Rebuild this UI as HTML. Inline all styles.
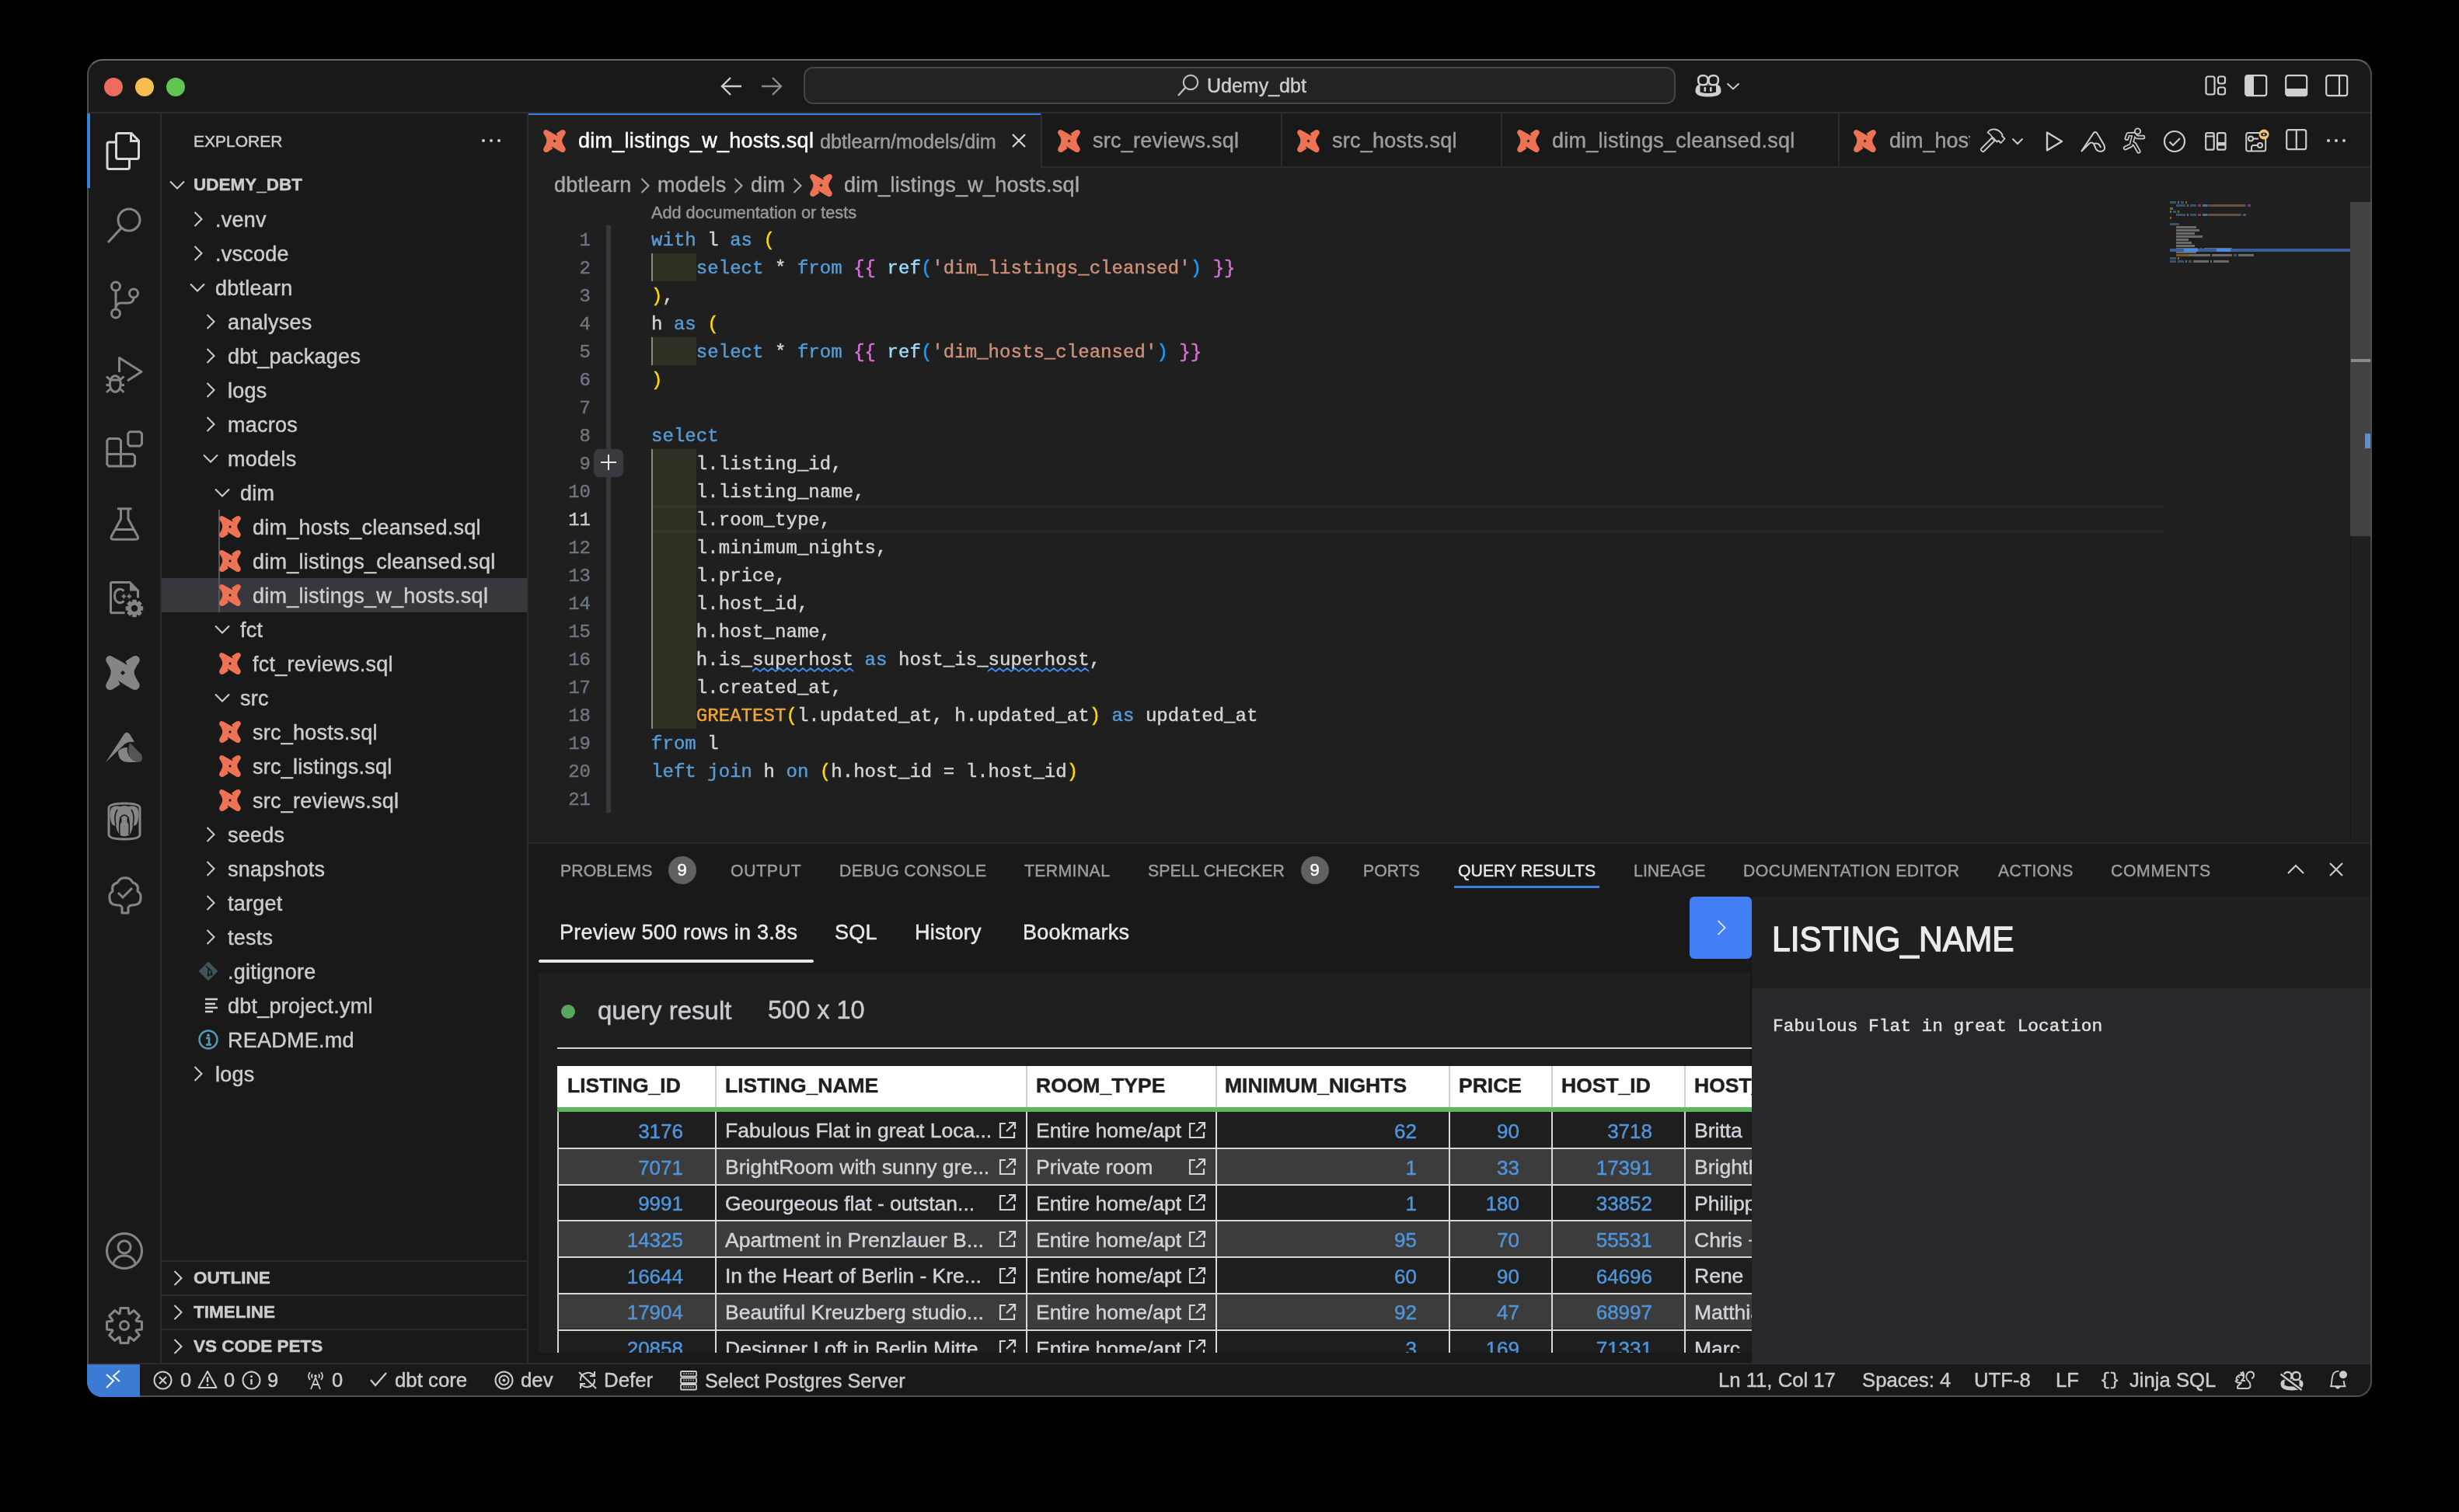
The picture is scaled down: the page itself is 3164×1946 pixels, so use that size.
<!DOCTYPE html>
<html><head><meta charset="utf-8">
<style>
*{box-sizing:border-box;margin:0;padding:0}
html,body{width:3164px;height:1946px;background:#000;overflow:hidden}
body{font-family:"Liberation Sans",sans-serif;color:#cccccc;position:relative}
.a{position:absolute}
.win{position:absolute;left:0;top:0;width:3164px;height:1946px;clip-path:inset(76px 112px 148px 112px round 20px);will-change:transform}
.t{position:absolute;white-space:pre;line-height:1;-webkit-text-stroke:0.45px currentColor}
.mono{font-family:"Liberation Mono",monospace}
svg{position:absolute;overflow:visible}
</style></head><body>
<div class="win">
<div class="a" style="left:112px;top:76px;width:2940px;height:1722px;background:#191919;"></div>
<div class="a" style="left:112px;top:144px;width:2940px;height:2px;background:#2d2d2d;"></div>
<div class="a" style="left:206px;top:146px;width:2px;height:1608px;background:#2b2b2b;"></div>
<div class="a" style="left:678px;top:146px;width:2px;height:1608px;background:#2b2b2b;"></div>
<div class="a" style="left:680px;top:146px;width:2372px;height:938px;background:#1f1f1f;"></div>
<div class="a" style="left:680px;top:146px;width:2372px;height:68px;background:#191919;"></div>
<div class="a" style="left:680px;top:214px;width:2372px;height:2px;background:#2b2b2b;"></div>
<div class="a" style="left:680px;top:1084px;width:2372px;height:2px;background:#2b2b2b;"></div>
<div class="a" style="left:112px;top:1754px;width:2940px;height:2px;background:#2b2b2b;"></div>
<div class="a" style="left:134px;top:100px;width:24px;height:24px;border-radius:50%;background:#ed6a5e"></div>
<div class="a" style="left:174px;top:100px;width:24px;height:24px;border-radius:50%;background:#f4bf4f"></div>
<div class="a" style="left:214px;top:100px;width:24px;height:24px;border-radius:50%;background:#61c554"></div>
<svg style="left:926px;top:98px;" width="30" height="26" viewBox="0 0 30 26"><path d="M14 2 L3 13 L14 24 M3 13 H28" fill="none" stroke="#cccccc" stroke-width="2.4"/></svg>
<svg style="left:978px;top:98px;" width="30" height="26" viewBox="0 0 30 26"><path d="M16 2 L27 13 L16 24 M27 13 H2" fill="none" stroke="#8b8b8b" stroke-width="2.4"/></svg>
<div class="a" style="left:1034px;top:86px;width:1122px;height:48px;border-radius:12px;background:#232323;border:2px solid #454545"></div>
<svg style="left:1514px;top:95px;" width="30" height="30" viewBox="0 0 30 30"><circle cx="18" cy="11" r="9.2" fill="none" stroke="#bdbdbd" stroke-width="2.2"/><path d="M11.5 17.5 L2 28" stroke="#bdbdbd" stroke-width="2.4" fill="none"/></svg>
<div class="t" style="left:1553px;top:97.75px;font-size:25px;color:#cccccc;font-weight:normal;">Udemy_dbt</div>
<svg style="left:2180px;top:95px;" width="36" height="30" viewBox="0 0 36 30"><path d="M1.5 22 Q1.5 15.5 6 14 H30 Q34.5 15.5 34.5 22 Q34.5 29.5 18 29.5 Q1.5 29.5 1.5 22 Z" fill="#cfcfcf"/>
<path d="M7.5 14.5 H28 V23.5 Q18 26.5 7.5 23.5 Z" fill="#191919"/>
<rect x="5.2" y="2.3" width="12.3" height="12" rx="5" fill="none" stroke="#cfcfcf" stroke-width="2.6"/>
<rect x="18.5" y="2.3" width="12.3" height="12" rx="5" fill="none" stroke="#cfcfcf" stroke-width="2.6"/>
<rect x="12.5" y="17" width="2.6" height="6" rx="1.3" fill="#cfcfcf"/><rect x="20" y="17" width="2.6" height="6" rx="1.3" fill="#cfcfcf"/></svg>
<svg style="left:2221px;top:106px;" width="18" height="10" viewBox="0 0 18 10"><path d="M1.5 1.5 L9 8.5 L16.5 1.5" fill="none" stroke="#cccccc" stroke-width="2"/></svg>
<svg style="left:2837px;top:97px;" width="28" height="26" viewBox="0 0 28 26"><rect x="1.5" y="1.5" width="11" height="23" rx="2.5" fill="none" stroke="#d0d0d0" stroke-width="2.2"/><rect x="17" y="1.5" width="9" height="9" rx="2.5" fill="none" stroke="#d0d0d0" stroke-width="2.2"/><rect x="17" y="15.5" width="9" height="9" rx="2.5" fill="none" stroke="#d0d0d0" stroke-width="2.2"/></svg>
<svg style="left:2888px;top:96px;" width="30" height="28" viewBox="0 0 30 28"><rect x="1.2" y="1.2" width="27" height="26" rx="3" fill="none" stroke="#d0d0d0" stroke-width="2.2"/><path d="M2 3 Q2 2 3.5 2 H12 V27 H3.5 Q2 27 2 25.5 Z" fill="#d0d0d0"/></svg>
<svg style="left:2940px;top:96px;" width="30" height="28" viewBox="0 0 30 28"><rect x="1.2" y="1.2" width="27" height="26" rx="3" fill="none" stroke="#d0d0d0" stroke-width="2.2"/><path d="M2 18 H28 V25.5 Q28 27 26.5 27 H3.5 Q2 27 2 25.5 Z" fill="#d0d0d0"/></svg>
<svg style="left:2992px;top:96px;" width="30" height="28" viewBox="0 0 30 28"><rect x="1.2" y="1.2" width="27" height="26" rx="3" fill="none" stroke="#d0d0d0" stroke-width="2.2"/><path d="M18 1 V27" stroke="#d0d0d0" stroke-width="2.2"/></svg>
<div class="a" style="left:112px;top:146px;width:4px;height:96px;background:#3b82e0;"></div>
<svg style="left:136px;top:170px;" width="48" height="48" viewBox="0 0 48 48"><path d="M16 1.5 H33 L42.5 11 V32 Q42.5 34.5 40 34.5 H16 Q13.5 34.5 13.5 32 V4 Q13.5 1.5 16 1.5 Z" fill="none" stroke="#d7d7d7" stroke-width="3"/>
<path d="M32.5 1.5 V11.5 H42.5" fill="none" stroke="#d7d7d7" stroke-width="3"/>
<path d="M13.5 13 H4.5 Q2 13 2 15.5 V45 Q2 47.5 4.5 47.5 H28 Q30.5 47.5 30.5 45 V34.5" fill="none" stroke="#d7d7d7" stroke-width="3"/></svg>
<svg style="left:136px;top:266px;" width="48" height="48" viewBox="0 0 48 48"><circle cx="30" cy="17" r="14" fill="none" stroke="#858585" stroke-width="3"/><path d="M20 27.5 L3 46" stroke="#858585" stroke-width="3.2" fill="none"/></svg>
<svg style="left:136px;top:362px;" width="48" height="48" viewBox="0 0 48 48"><circle cx="13" cy="6.5" r="5.5" fill="none" stroke="#858585" stroke-width="3"/><circle cx="13" cy="41.5" r="5.5" fill="none" stroke="#858585" stroke-width="3"/><circle cx="36" cy="15.5" r="5.5" fill="none" stroke="#858585" stroke-width="3"/>
<path d="M13 12 V36 M36 21 Q36 28 28 28 H20 Q13 28 13 35" fill="none" stroke="#858585" stroke-width="3"/></svg>
<svg style="left:136px;top:457px;" width="48" height="50" viewBox="0 0 48 50"><path d="M17.5 22 V3.5 L46 21.5 L28 33" fill="none" stroke="#858585" stroke-width="3" stroke-linejoin="round"/>
<ellipse cx="12.3" cy="37" rx="7" ry="10.3" fill="none" stroke="#858585" stroke-width="3"/><path d="M5.5 32 H19 M0.5 38.5 H5 M19.5 38.5 H24 M1 27.5 L6 32 M23.5 27.5 L18.5 32 M1 48 L6 43.5 M23.5 48 L18.5 43.5" stroke="#858585" stroke-width="3" fill="none"/></svg>
<svg style="left:136px;top:553px;" width="50" height="50" viewBox="0 0 50 50"><path d="M1.8 14 L4 11.5 H17 L19.5 14 V31.5 H35 L37.5 34 V44.5 L35 47 H4 L1.8 44.5 Z M1.8 31.5 H19.5 V47" fill="none" stroke="#858585" stroke-width="3" stroke-linejoin="round"/>
<path d="M28.8 5 L31 2.7 H44 L46.5 5 V18.5 L44 21 H31 L28.8 18.5 Z" fill="none" stroke="#858585" stroke-width="3" stroke-linejoin="round"/></svg>
<svg style="left:136px;top:652px;" width="48" height="44" viewBox="0 0 48 44"><path d="M15 2.8 H33.5 M19.5 3 V16 L7.5 38 Q5.5 42.3 10 42.3 H38.5 Q43 42.3 41 38 L29 16 V3 M13 29.5 H35.5" fill="none" stroke="#858585" stroke-width="3" stroke-linejoin="round"/></svg>
<svg style="left:137px;top:748px;" width="50" height="50" viewBox="0 0 50 50"><path d="M23.5 40.8 H7 Q5.5 40.8 5.5 39.3 V3 Q5.5 1.5 7 1.5 H30 L40.5 12 V21.5" fill="none" stroke="#858585" stroke-width="3"/>
<path d="M30 1.5 L40.5 12.5 H30 Z" fill="#858585"/>
<path d="M22.5 12.5 Q19 9.5 15.5 10.5 Q10.5 12.5 10.5 19 Q10.5 25.5 15.5 27.5 Q19 28.5 22.5 25.5" fill="none" stroke="#858585" stroke-width="3"/>
<path d="M19.5 19.5 H25 M22.3 16.8 V22.2 M26.5 19.5 H32 M29.3 16.8 V22.2" stroke="#858585" stroke-width="2"/>
<path d="M47.22 32.49 L47.22 37.51 L43.30 38.26 L43.47 37.86 L45.71 41.16 L42.16 44.71 L38.86 42.47 L39.26 42.30 L38.51 46.22 L33.49 46.22 L32.74 42.30 L33.14 42.47 L29.84 44.71 L26.29 41.16 L28.53 37.86 L28.70 38.26 L24.78 37.51 L24.78 32.49 L28.70 31.74 L28.53 32.14 L26.29 28.84 L29.84 25.29 L33.14 27.53 L32.74 27.70 L33.49 23.78 L38.51 23.78 L39.26 27.70 L38.86 27.53 L42.16 25.29 L45.71 28.84 L43.47 32.14 L43.30 31.74 Z" fill="#858585"/><circle cx="36" cy="35" r="4.2" fill="#191919"/></svg>
<svg style="left:136px;top:844px;" width="44" height="44" viewBox="0 0 100 100"><path d="M12 0 Q4 0 1 8 Q-1 14 3 20 Q16 38 15 48 Q15 60 3 79 Q-1 86 1 92 Q5 100 12 100 Q17 100 22 97 L42 84 L37 72 Q44 78 80 99 Q86 101 92 99 Q99 95 99 88 Q100 83 97 79 Q84 60 83 48 Q84 38 97 20 Q101 13 99 8 Q95 0 88 0 Q83 0 78 3 L58 16 L63 27 Q55 22 18 1.5 Q15 0 12 0 Z" fill="#858585"/><path d="M50 43 L57 50 L50 57 L43 50 Z" fill="#191919"/></svg>
<svg style="left:136px;top:940px;" width="48" height="42" viewBox="0 0 48 42"><path d="M0 41 L23.5 5 Q27 0 31 5 L37 15 Q27 14 22 20 Z" fill="#858585"/><path d="M16 27 Q16 41 30 41 L41 41 Q34 38 30 33 Q27 28 28 22 Q20 22 16 27 Z" fill="#858585"/><path d="M31 16 L46 31 Q50 41 40 41 Q33 39 30 32 Q28 25 31 16 Z" fill="#555555"/></svg>
<svg style="left:137px;top:1032px;" width="46" height="50" viewBox="0 0 46 50"><path d="M3 8 Q3 2 23 2 Q43 2 43 8 V42 Q43 48 23 48 Q3 48 3 42 Z" fill="none" stroke="#858585" stroke-width="3"/>
<path d="M6 8 Q10 4 18 6 Q23 4 28 6 Q36 4 40 8 Q43 16 40 26 Q38 32 34 30 Q33 38 30 42 Q26 45 23 44 Q20 45 17 42 Q13 38 12 30 Q8 32 6 26 Q3 16 6 8 Z" fill="#858585"/>
<path d="M12 30 Q9 18 14 10 M34 30 Q37 18 32 10 M17 42 Q16 30 18 20 Q23 14 28 20 Q30 30 29 42 M18 20 Q20 26 17 28 M28 20 Q26 26 29 28" fill="none" stroke="#191919" stroke-width="1.6"/></svg>
<svg style="left:138px;top:1128px;" width="46" height="50" viewBox="0 0 46 50"><path d="M19 39 V47 H27 V39 M27 39 Q30 37 32 37 Q43 37 43 28 Q44 22 39 19 Q41 10 33 8 Q29 1 23 2 Q17 1 13 8 Q5 10 7 19 Q2 22 3 28 Q3 37 14 37 Q17 37 19 39" fill="none" stroke="#858585" stroke-width="3" stroke-linejoin="round"/><path d="M14 21 L20 27 L32 15" fill="none" stroke="#858585" stroke-width="3"/></svg>
<svg style="left:136px;top:1586px;" width="48" height="48" viewBox="0 0 48 48"><circle cx="24" cy="24" r="22.5" fill="none" stroke="#858585" stroke-width="3"/><circle cx="24" cy="19" r="8" fill="none" stroke="#858585" stroke-width="3"/><path d="M10 40 Q13 30 24 30 Q35 30 38 40" fill="none" stroke="#858585" stroke-width="3"/></svg>
<svg style="left:136px;top:1682px;" width="48" height="48" viewBox="0 0 48 48"><path d="M46.45 18.98 L46.45 29.02 L39.44 29.81 L39.03 30.81 L43.42 36.32 L36.32 43.42 L30.81 39.03 L29.81 39.44 L29.02 46.45 L18.98 46.45 L18.19 39.44 L17.19 39.03 L11.68 43.42 L4.58 36.32 L8.97 30.81 L8.56 29.81 L1.55 29.02 L1.55 18.98 L8.56 18.19 L8.97 17.19 L4.58 11.68 L11.68 4.58 L17.19 8.97 L18.19 8.56 L18.98 1.55 L29.02 1.55 L29.81 8.56 L30.81 8.97 L36.32 4.58 L43.42 11.68 L39.03 17.19 L39.44 18.19 Z" fill="none" stroke="#858585" stroke-width="3" stroke-linejoin="round"/><circle cx="24" cy="24" r="5.5" fill="none" stroke="#858585" stroke-width="3"/></svg>
<div class="t" style="left:249px;top:171.15px;font-size:21px;color:#cccccc;font-weight:normal;">EXPLORER</div>
<div class="a" style="left:619.8px;top:179px;width:4.4px;height:4.4px;border-radius:50%;background:#cccccc"></div>
<div class="a" style="left:629.8px;top:179px;width:4.4px;height:4.4px;border-radius:50%;background:#cccccc"></div>
<div class="a" style="left:639.8px;top:179px;width:4.4px;height:4.4px;border-radius:50%;background:#cccccc"></div>
<div class="a" style="left:208px;top:744px;width:470px;height:44px;background:#37373d;"></div>
<div class="a" style="left:281px;top:656px;width:2px;height:132px;background:#585858;"></div>
<svg style="left:218px;top:232px;" width="20" height="12" viewBox="0 0 20 12"><path d="M1 1.5 L10 10.5 L19 1.5" fill="none" stroke="#cccccc" stroke-width="2"/></svg>
<div class="t" style="left:249px;top:227.38px;font-size:22.5px;color:#cccccc;font-weight:bold;">UDEMY_DBT</div>
<svg style="left:249px;top:272px;" width="12" height="20" viewBox="0 0 12 20"><path d="M1.5 1 L10.5 10 L1.5 19" fill="none" stroke="#cccccc" stroke-width="2"/></svg>
<div class="t" style="left:277px;top:270.05px;font-size:27px;color:#cccccc;font-weight:normal;;letter-spacing:0.25px">.venv</div>
<svg style="left:249px;top:316px;" width="12" height="20" viewBox="0 0 12 20"><path d="M1.5 1 L10.5 10 L1.5 19" fill="none" stroke="#cccccc" stroke-width="2"/></svg>
<div class="t" style="left:277px;top:314.05px;font-size:27px;color:#cccccc;font-weight:normal;;letter-spacing:0.25px">.vscode</div>
<svg style="left:244px;top:364px;" width="20" height="12" viewBox="0 0 20 12"><path d="M1 1.5 L10 10.5 L19 1.5" fill="none" stroke="#cccccc" stroke-width="2"/></svg>
<div class="t" style="left:277px;top:358.05px;font-size:27px;color:#cccccc;font-weight:normal;;letter-spacing:0.25px">dbtlearn</div>
<svg style="left:265px;top:404px;" width="12" height="20" viewBox="0 0 12 20"><path d="M1.5 1 L10.5 10 L1.5 19" fill="none" stroke="#cccccc" stroke-width="2"/></svg>
<div class="t" style="left:293px;top:402.05px;font-size:27px;color:#cccccc;font-weight:normal;;letter-spacing:0.25px">analyses</div>
<svg style="left:265px;top:448px;" width="12" height="20" viewBox="0 0 12 20"><path d="M1.5 1 L10.5 10 L1.5 19" fill="none" stroke="#cccccc" stroke-width="2"/></svg>
<div class="t" style="left:293px;top:446.05px;font-size:27px;color:#cccccc;font-weight:normal;;letter-spacing:0.25px">dbt_packages</div>
<svg style="left:265px;top:492px;" width="12" height="20" viewBox="0 0 12 20"><path d="M1.5 1 L10.5 10 L1.5 19" fill="none" stroke="#cccccc" stroke-width="2"/></svg>
<div class="t" style="left:293px;top:490.05px;font-size:27px;color:#cccccc;font-weight:normal;;letter-spacing:0.25px">logs</div>
<svg style="left:265px;top:536px;" width="12" height="20" viewBox="0 0 12 20"><path d="M1.5 1 L10.5 10 L1.5 19" fill="none" stroke="#cccccc" stroke-width="2"/></svg>
<div class="t" style="left:293px;top:534.05px;font-size:27px;color:#cccccc;font-weight:normal;;letter-spacing:0.25px">macros</div>
<svg style="left:261px;top:584px;" width="20" height="12" viewBox="0 0 20 12"><path d="M1 1.5 L10 10.5 L19 1.5" fill="none" stroke="#cccccc" stroke-width="2"/></svg>
<div class="t" style="left:293px;top:578.05px;font-size:27px;color:#cccccc;font-weight:normal;;letter-spacing:0.25px">models</div>
<svg style="left:276px;top:628px;" width="20" height="12" viewBox="0 0 20 12"><path d="M1 1.5 L10 10.5 L19 1.5" fill="none" stroke="#cccccc" stroke-width="2"/></svg>
<div class="t" style="left:309px;top:622.05px;font-size:27px;color:#cccccc;font-weight:normal;;letter-spacing:0.25px">dim</div>
<svg style="left:282px;top:664px;" width="28" height="28" viewBox="0 0 100 100"><path d="M12 0 Q4 0 1 8 Q-1 14 3 20 Q16 38 15 48 Q15 60 3 79 Q-1 86 1 92 Q5 100 12 100 Q17 100 22 97 L42 84 L37 72 Q44 78 80 99 Q86 101 92 99 Q99 95 99 88 Q100 83 97 79 Q84 60 83 48 Q84 38 97 20 Q101 13 99 8 Q95 0 88 0 Q83 0 78 3 L58 16 L63 27 Q55 22 18 1.5 Q15 0 12 0 Z" fill="#ed7354"/><path d="M50 43 L57 50 L50 57 L43 50 Z" fill="#1f1f1f"/></svg>
<div class="t" style="left:325px;top:666.05px;font-size:27px;color:#cccccc;font-weight:normal;;letter-spacing:0.25px">dim_hosts_cleansed.sql</div>
<svg style="left:282px;top:708px;" width="28" height="28" viewBox="0 0 100 100"><path d="M12 0 Q4 0 1 8 Q-1 14 3 20 Q16 38 15 48 Q15 60 3 79 Q-1 86 1 92 Q5 100 12 100 Q17 100 22 97 L42 84 L37 72 Q44 78 80 99 Q86 101 92 99 Q99 95 99 88 Q100 83 97 79 Q84 60 83 48 Q84 38 97 20 Q101 13 99 8 Q95 0 88 0 Q83 0 78 3 L58 16 L63 27 Q55 22 18 1.5 Q15 0 12 0 Z" fill="#ed7354"/><path d="M50 43 L57 50 L50 57 L43 50 Z" fill="#1f1f1f"/></svg>
<div class="t" style="left:325px;top:710.05px;font-size:27px;color:#cccccc;font-weight:normal;;letter-spacing:0.25px">dim_listings_cleansed.sql</div>
<svg style="left:282px;top:752px;" width="28" height="28" viewBox="0 0 100 100"><path d="M12 0 Q4 0 1 8 Q-1 14 3 20 Q16 38 15 48 Q15 60 3 79 Q-1 86 1 92 Q5 100 12 100 Q17 100 22 97 L42 84 L37 72 Q44 78 80 99 Q86 101 92 99 Q99 95 99 88 Q100 83 97 79 Q84 60 83 48 Q84 38 97 20 Q101 13 99 8 Q95 0 88 0 Q83 0 78 3 L58 16 L63 27 Q55 22 18 1.5 Q15 0 12 0 Z" fill="#ed7354"/><path d="M50 43 L57 50 L50 57 L43 50 Z" fill="#1f1f1f"/></svg>
<div class="t" style="left:325px;top:754.05px;font-size:27px;color:#cccccc;font-weight:normal;;letter-spacing:0.25px">dim_listings_w_hosts.sql</div>
<svg style="left:276px;top:804px;" width="20" height="12" viewBox="0 0 20 12"><path d="M1 1.5 L10 10.5 L19 1.5" fill="none" stroke="#cccccc" stroke-width="2"/></svg>
<div class="t" style="left:309px;top:798.05px;font-size:27px;color:#cccccc;font-weight:normal;;letter-spacing:0.25px">fct</div>
<svg style="left:282px;top:840px;" width="28" height="28" viewBox="0 0 100 100"><path d="M12 0 Q4 0 1 8 Q-1 14 3 20 Q16 38 15 48 Q15 60 3 79 Q-1 86 1 92 Q5 100 12 100 Q17 100 22 97 L42 84 L37 72 Q44 78 80 99 Q86 101 92 99 Q99 95 99 88 Q100 83 97 79 Q84 60 83 48 Q84 38 97 20 Q101 13 99 8 Q95 0 88 0 Q83 0 78 3 L58 16 L63 27 Q55 22 18 1.5 Q15 0 12 0 Z" fill="#ed7354"/><path d="M50 43 L57 50 L50 57 L43 50 Z" fill="#1f1f1f"/></svg>
<div class="t" style="left:325px;top:842.05px;font-size:27px;color:#cccccc;font-weight:normal;;letter-spacing:0.25px">fct_reviews.sql</div>
<svg style="left:276px;top:892px;" width="20" height="12" viewBox="0 0 20 12"><path d="M1 1.5 L10 10.5 L19 1.5" fill="none" stroke="#cccccc" stroke-width="2"/></svg>
<div class="t" style="left:309px;top:886.05px;font-size:27px;color:#cccccc;font-weight:normal;;letter-spacing:0.25px">src</div>
<svg style="left:282px;top:928px;" width="28" height="28" viewBox="0 0 100 100"><path d="M12 0 Q4 0 1 8 Q-1 14 3 20 Q16 38 15 48 Q15 60 3 79 Q-1 86 1 92 Q5 100 12 100 Q17 100 22 97 L42 84 L37 72 Q44 78 80 99 Q86 101 92 99 Q99 95 99 88 Q100 83 97 79 Q84 60 83 48 Q84 38 97 20 Q101 13 99 8 Q95 0 88 0 Q83 0 78 3 L58 16 L63 27 Q55 22 18 1.5 Q15 0 12 0 Z" fill="#ed7354"/><path d="M50 43 L57 50 L50 57 L43 50 Z" fill="#1f1f1f"/></svg>
<div class="t" style="left:325px;top:930.05px;font-size:27px;color:#cccccc;font-weight:normal;;letter-spacing:0.25px">src_hosts.sql</div>
<svg style="left:282px;top:972px;" width="28" height="28" viewBox="0 0 100 100"><path d="M12 0 Q4 0 1 8 Q-1 14 3 20 Q16 38 15 48 Q15 60 3 79 Q-1 86 1 92 Q5 100 12 100 Q17 100 22 97 L42 84 L37 72 Q44 78 80 99 Q86 101 92 99 Q99 95 99 88 Q100 83 97 79 Q84 60 83 48 Q84 38 97 20 Q101 13 99 8 Q95 0 88 0 Q83 0 78 3 L58 16 L63 27 Q55 22 18 1.5 Q15 0 12 0 Z" fill="#ed7354"/><path d="M50 43 L57 50 L50 57 L43 50 Z" fill="#1f1f1f"/></svg>
<div class="t" style="left:325px;top:974.05px;font-size:27px;color:#cccccc;font-weight:normal;;letter-spacing:0.25px">src_listings.sql</div>
<svg style="left:282px;top:1016px;" width="28" height="28" viewBox="0 0 100 100"><path d="M12 0 Q4 0 1 8 Q-1 14 3 20 Q16 38 15 48 Q15 60 3 79 Q-1 86 1 92 Q5 100 12 100 Q17 100 22 97 L42 84 L37 72 Q44 78 80 99 Q86 101 92 99 Q99 95 99 88 Q100 83 97 79 Q84 60 83 48 Q84 38 97 20 Q101 13 99 8 Q95 0 88 0 Q83 0 78 3 L58 16 L63 27 Q55 22 18 1.5 Q15 0 12 0 Z" fill="#ed7354"/><path d="M50 43 L57 50 L50 57 L43 50 Z" fill="#1f1f1f"/></svg>
<div class="t" style="left:325px;top:1018.05px;font-size:27px;color:#cccccc;font-weight:normal;;letter-spacing:0.25px">src_reviews.sql</div>
<svg style="left:265px;top:1064px;" width="12" height="20" viewBox="0 0 12 20"><path d="M1.5 1 L10.5 10 L1.5 19" fill="none" stroke="#cccccc" stroke-width="2"/></svg>
<div class="t" style="left:293px;top:1062.05px;font-size:27px;color:#cccccc;font-weight:normal;;letter-spacing:0.25px">seeds</div>
<svg style="left:265px;top:1108px;" width="12" height="20" viewBox="0 0 12 20"><path d="M1.5 1 L10.5 10 L1.5 19" fill="none" stroke="#cccccc" stroke-width="2"/></svg>
<div class="t" style="left:293px;top:1106.05px;font-size:27px;color:#cccccc;font-weight:normal;;letter-spacing:0.25px">snapshots</div>
<svg style="left:265px;top:1152px;" width="12" height="20" viewBox="0 0 12 20"><path d="M1.5 1 L10.5 10 L1.5 19" fill="none" stroke="#cccccc" stroke-width="2"/></svg>
<div class="t" style="left:293px;top:1150.05px;font-size:27px;color:#cccccc;font-weight:normal;;letter-spacing:0.25px">target</div>
<svg style="left:265px;top:1196px;" width="12" height="20" viewBox="0 0 12 20"><path d="M1.5 1 L10.5 10 L1.5 19" fill="none" stroke="#cccccc" stroke-width="2"/></svg>
<div class="t" style="left:293px;top:1194.05px;font-size:27px;color:#cccccc;font-weight:normal;;letter-spacing:0.25px">tests</div>
<svg style="left:256px;top:1238px;" width="24" height="24" viewBox="0 0 24 24"><path d="M12 1 L23 12 L12 23 L1 12 Z" fill="#41535b" stroke="#41535b" stroke-width="2" stroke-linejoin="round"/><path d="M9 5 L12 8 V17 M12 8 L16 12 V16" stroke="#191919" stroke-width="1.6" fill="none"/><circle cx="12" cy="17" r="1.8" fill="#191919"/><circle cx="16" cy="16" r="1.8" fill="#191919"/></svg>
<div class="t" style="left:293px;top:1238.05px;font-size:27px;color:#cccccc;font-weight:normal;;letter-spacing:0.25px">.gitignore</div>
<svg style="left:263px;top:1284px;" width="18" height="20" viewBox="0 0 18 20"><path d="M1 2 H17 M1 8 H14 M1 13 H17 M1 18 H11" stroke="#d0d0d0" stroke-width="2.6" fill="none"/></svg>
<div class="t" style="left:293px;top:1282.05px;font-size:27px;color:#cccccc;font-weight:normal;;letter-spacing:0.25px">dbt_project.yml</div>
<svg style="left:255px;top:1325px;" width="26" height="26" viewBox="0 0 26 26"><circle cx="13" cy="13" r="11.5" fill="none" stroke="#519aba" stroke-width="2.4"/><circle cx="13" cy="7.5" r="1.9" fill="#519aba"/><path d="M10 11 H14 V19 M10 19.5 H17" stroke="#519aba" stroke-width="2.6" fill="none"/></svg>
<div class="t" style="left:293px;top:1326.05px;font-size:27px;color:#cccccc;font-weight:normal;;letter-spacing:0.25px">README.md</div>
<svg style="left:249px;top:1372px;" width="12" height="20" viewBox="0 0 12 20"><path d="M1.5 1 L10.5 10 L1.5 19" fill="none" stroke="#cccccc" stroke-width="2"/></svg>
<div class="t" style="left:277px;top:1370.05px;font-size:27px;color:#cccccc;font-weight:normal;;letter-spacing:0.25px">logs</div>
<div class="a" style="left:208px;top:1622px;width:470px;height:2px;background:#2b2b2b;"></div>
<svg style="left:223px;top:1635px;" width="12" height="20" viewBox="0 0 12 20"><path d="M1.5 1 L10.5 10 L1.5 19" fill="none" stroke="#cccccc" stroke-width="2"/></svg>
<div class="t" style="left:249px;top:1633.88px;font-size:22.5px;color:#cccccc;font-weight:bold;">OUTLINE</div>
<div class="a" style="left:208px;top:1666px;width:470px;height:2px;background:#2b2b2b;"></div>
<svg style="left:223px;top:1679px;" width="12" height="20" viewBox="0 0 12 20"><path d="M1.5 1 L10.5 10 L1.5 19" fill="none" stroke="#cccccc" stroke-width="2"/></svg>
<div class="t" style="left:249px;top:1677.88px;font-size:22.5px;color:#cccccc;font-weight:bold;">TIMELINE</div>
<div class="a" style="left:208px;top:1710px;width:470px;height:2px;background:#2b2b2b;"></div>
<svg style="left:223px;top:1723px;" width="12" height="20" viewBox="0 0 12 20"><path d="M1.5 1 L10.5 10 L1.5 19" fill="none" stroke="#cccccc" stroke-width="2"/></svg>
<div class="t" style="left:249px;top:1721.88px;font-size:22.5px;color:#cccccc;font-weight:bold;">VS CODE PETS</div>
<div class="a" style="left:680px;top:146px;width:659px;height:70px;background:#1f1f1f;"></div>
<div class="a" style="left:680px;top:146px;width:659px;height:2px;background:#3b82e0;"></div>
<div class="a" style="left:1339px;top:146px;width:2px;height:68px;background:#2b2b2b;"></div>
<div class="a" style="left:1648px;top:146px;width:2px;height:68px;background:#2b2b2b;"></div>
<div class="a" style="left:1931px;top:146px;width:2px;height:68px;background:#2b2b2b;"></div>
<div class="a" style="left:2365px;top:146px;width:2px;height:68px;background:#2b2b2b;"></div>
<svg style="left:699px;top:167px;" width="29" height="29" viewBox="0 0 100 100"><path d="M12 0 Q4 0 1 8 Q-1 14 3 20 Q16 38 15 48 Q15 60 3 79 Q-1 86 1 92 Q5 100 12 100 Q17 100 22 97 L42 84 L37 72 Q44 78 80 99 Q86 101 92 99 Q99 95 99 88 Q100 83 97 79 Q84 60 83 48 Q84 38 97 20 Q101 13 99 8 Q95 0 88 0 Q83 0 78 3 L58 16 L63 27 Q55 22 18 1.5 Q15 0 12 0 Z" fill="#ed7354"/><path d="M50 43 L57 50 L50 57 L43 50 Z" fill="#1f1f1f"/></svg>
<div class="t" style="left:744px;top:168.05px;font-size:27px;color:#ffffff;font-weight:normal;;letter-spacing:0.25px">dim_listings_w_hosts.sql</div>
<div class="t" style="left:1055px;top:169.58px;font-size:25.2px;color:#9d9d9d;font-weight:normal;">dbtlearn/models/dim</div>
<svg style="left:1301px;top:171px;" width="20" height="20" viewBox="0 0 20 20"><path d="M2 2 L18 18 M18 2 L2 18" stroke="#d8d8d8" stroke-width="2.2" fill="none"/></svg>
<svg style="left:1361px;top:167px;" width="29" height="29" viewBox="0 0 100 100"><path d="M12 0 Q4 0 1 8 Q-1 14 3 20 Q16 38 15 48 Q15 60 3 79 Q-1 86 1 92 Q5 100 12 100 Q17 100 22 97 L42 84 L37 72 Q44 78 80 99 Q86 101 92 99 Q99 95 99 88 Q100 83 97 79 Q84 60 83 48 Q84 38 97 20 Q101 13 99 8 Q95 0 88 0 Q83 0 78 3 L58 16 L63 27 Q55 22 18 1.5 Q15 0 12 0 Z" fill="#ed7354"/><path d="M50 43 L57 50 L50 57 L43 50 Z" fill="#1f1f1f"/></svg>
<div class="t" style="left:1406px;top:168.05px;font-size:27px;color:#9d9d9d;font-weight:normal;;letter-spacing:0.25px">src_reviews.sql</div>
<svg style="left:1669px;top:167px;" width="29" height="29" viewBox="0 0 100 100"><path d="M12 0 Q4 0 1 8 Q-1 14 3 20 Q16 38 15 48 Q15 60 3 79 Q-1 86 1 92 Q5 100 12 100 Q17 100 22 97 L42 84 L37 72 Q44 78 80 99 Q86 101 92 99 Q99 95 99 88 Q100 83 97 79 Q84 60 83 48 Q84 38 97 20 Q101 13 99 8 Q95 0 88 0 Q83 0 78 3 L58 16 L63 27 Q55 22 18 1.5 Q15 0 12 0 Z" fill="#ed7354"/><path d="M50 43 L57 50 L50 57 L43 50 Z" fill="#1f1f1f"/></svg>
<div class="t" style="left:1714px;top:168.05px;font-size:27px;color:#9d9d9d;font-weight:normal;;letter-spacing:0.25px">src_hosts.sql</div>
<svg style="left:1952px;top:167px;" width="29" height="29" viewBox="0 0 100 100"><path d="M12 0 Q4 0 1 8 Q-1 14 3 20 Q16 38 15 48 Q15 60 3 79 Q-1 86 1 92 Q5 100 12 100 Q17 100 22 97 L42 84 L37 72 Q44 78 80 99 Q86 101 92 99 Q99 95 99 88 Q100 83 97 79 Q84 60 83 48 Q84 38 97 20 Q101 13 99 8 Q95 0 88 0 Q83 0 78 3 L58 16 L63 27 Q55 22 18 1.5 Q15 0 12 0 Z" fill="#ed7354"/><path d="M50 43 L57 50 L50 57 L43 50 Z" fill="#1f1f1f"/></svg>
<div class="t" style="left:1997px;top:168.05px;font-size:27px;color:#9d9d9d;font-weight:normal;;letter-spacing:0.25px">dim_listings_cleansed.sql</div>
<svg style="left:2385px;top:167px;" width="29" height="29" viewBox="0 0 100 100"><path d="M12 0 Q4 0 1 8 Q-1 14 3 20 Q16 38 15 48 Q15 60 3 79 Q-1 86 1 92 Q5 100 12 100 Q17 100 22 97 L42 84 L37 72 Q44 78 80 99 Q86 101 92 99 Q99 95 99 88 Q100 83 97 79 Q84 60 83 48 Q84 38 97 20 Q101 13 99 8 Q95 0 88 0 Q83 0 78 3 L58 16 L63 27 Q55 22 18 1.5 Q15 0 12 0 Z" fill="#ed7354"/><path d="M50 43 L57 50 L50 57 L43 50 Z" fill="#1f1f1f"/></svg>
<div class="a" style="left:2365px;top:146px;width:170px;height:68px;overflow:hidden">
<div class="t" style="left:66px;top:22.05px;font-size:27px;color:#9d9d9d">dim_hosts_cleansed.sql</div></div>
<svg style="left:2547px;top:165px;" width="34" height="32" viewBox="0 0 34 32"><path d="M2.5 26 L16 12.5 L19.5 16 L6 29.5 Q4.5 30.8 3.3 29.7 L2.3 28.7 Q1.2 27.3 2.5 26 Z" fill="none" stroke="#cccccc" stroke-width="1.8" stroke-linejoin="round"/><path d="M10.5 5.5 Q14 0.8 20 1.5 Q26 2.5 29.5 8.5 L29 10 L32.5 13.5 L27.5 19 L24.5 16 L22.5 17.5 L16.5 11.5 Q14 7.5 10.5 5.5 Z" fill="none" stroke="#cccccc" stroke-width="1.8" stroke-linejoin="round"/></svg>
<svg style="left:2588px;top:177px;" width="16" height="10" viewBox="0 0 16 10"><path d="M1.5 1.5 L8 8 L14.5 1.5" fill="none" stroke="#cccccc" stroke-width="2"/></svg>
<svg style="left:2631px;top:168px;" width="24" height="28" viewBox="0 0 24 28"><path d="M3 2.5 L22 14 L3 25.5 Z" fill="none" stroke="#cccccc" stroke-width="2.4" stroke-linejoin="round"/></svg>
<svg style="left:2677px;top:168px;" width="32" height="28" viewBox="0 0 32 28"><path d="M1 27 L17 3 Q19 1 21 3 L30 18 Q33 25 28 26.5 Q23 28 20 24 L17 17 Q14 14 11 17 Z" fill="none" stroke="#cccccc" stroke-width="2"/><path d="M17 17 Q24 15 26 22" fill="none" stroke="#cccccc" stroke-width="2"/></svg>
<svg style="left:2731px;top:164px;" width="32" height="34" viewBox="0 0 32 34"><path d="M14.8 8.6 L12 19.4 M14.8 8.6 L7.3 8.8 L5.4 14.2 M14.8 8.6 L18.5 12.4 L26.5 12.6 M12 19.4 L11 23.1 L3.6 26.6 M12 19.4 L15.7 21.7 L20.8 30.8" fill="none" stroke="#cccccc" stroke-width="5.6" stroke-linecap="round" stroke-linejoin="round"/><path d="M14.8 8.6 L12 19.4 M14.8 8.6 L7.3 8.8 L5.4 14.2 M14.8 8.6 L18.5 12.4 L26.5 12.6 M12 19.4 L11 23.1 L3.6 26.6 M12 19.4 L15.7 21.7 L20.8 30.8" fill="none" stroke="#191919" stroke-width="2.2" stroke-linecap="round" stroke-linejoin="round"/><circle cx="19.5" cy="4.9" r="3.6" fill="none" stroke="#cccccc" stroke-width="1.8"/></svg>
<svg style="left:2783px;top:167px;" width="30" height="30" viewBox="0 0 30 30"><circle cx="15" cy="15" r="13" fill="none" stroke="#cccccc" stroke-width="2.2"/><path d="M8.5 15.5 L13 20 L22 11" fill="none" stroke="#cccccc" stroke-width="2.2"/></svg>
<svg style="left:2837px;top:170px;" width="28" height="24" viewBox="0 0 28 24"><rect x="1.2" y="1.2" width="10.5" height="21.5" rx="2" fill="none" stroke="#cccccc" stroke-width="2.2"/><rect x="16" y="1.2" width="10.5" height="21.5" rx="2" fill="none" stroke="#cccccc" stroke-width="2.2"/><path d="M2 5.5 H11 M16.5 14 H26" stroke="#cccccc" stroke-width="2"/><rect x="16.5" y="14" width="9.5" height="3.5" fill="#cccccc"/></svg>
<svg style="left:2889px;top:166px;" width="30" height="30" viewBox="0 0 30 30"><rect x="1.2" y="5" width="25" height="23.5" rx="2.5" fill="none" stroke="#cccccc" stroke-width="2"/><circle cx="7" cy="12.5" r="3" fill="none" stroke="#cccccc" stroke-width="2"/><circle cx="19" cy="21" r="3" fill="none" stroke="#cccccc" stroke-width="2"/><path d="M10 12.5 H17 M16 21 H11 Q8 21 8 24 V28" fill="none" stroke="#cccccc" stroke-width="2"/><circle cx="24" cy="7" r="6.5" fill="#f5c56a"/><ellipse cx="24" cy="7" rx="4" ry="2.5" fill="#1b2a55"/><circle cx="24" cy="7" r="1.2" fill="#f5c56a"/></svg>
<svg style="left:2941px;top:166px;" width="28" height="28" viewBox="0 0 28 28"><rect x="1.2" y="1.2" width="25" height="25" rx="2.5" fill="none" stroke="#cccccc" stroke-width="2.2"/><path d="M13.8 1.5 V26.5" stroke="#cccccc" stroke-width="2.2"/></svg>
<div class="a" style="left:2993.6px;top:178.6px;width:4.8px;height:4.8px;border-radius:50%;background:#cccccc"></div>
<div class="a" style="left:3003.6px;top:178.6px;width:4.8px;height:4.8px;border-radius:50%;background:#cccccc"></div>
<div class="a" style="left:3013.6px;top:178.6px;width:4.8px;height:4.8px;border-radius:50%;background:#cccccc"></div>
<div class="t" style="left:713px;top:225.05px;font-size:27px;color:#a9a9a9;font-weight:normal;;letter-spacing:0.25px">dbtlearn</div>
<svg style="left:824px;top:229px;" width="12" height="20" viewBox="0 0 12 20"><path d="M1.5 1 L10.5 10 L1.5 19" fill="none" stroke="#a9a9a9" stroke-width="2"/></svg>
<div class="t" style="left:846px;top:225.05px;font-size:27px;color:#a9a9a9;font-weight:normal;;letter-spacing:0.25px">models</div>
<svg style="left:944px;top:229px;" width="12" height="20" viewBox="0 0 12 20"><path d="M1.5 1 L10.5 10 L1.5 19" fill="none" stroke="#a9a9a9" stroke-width="2"/></svg>
<div class="t" style="left:966px;top:225.05px;font-size:27px;color:#a9a9a9;font-weight:normal;;letter-spacing:0.25px">dim</div>
<svg style="left:1020px;top:229px;" width="12" height="20" viewBox="0 0 12 20"><path d="M1.5 1 L10.5 10 L1.5 19" fill="none" stroke="#a9a9a9" stroke-width="2"/></svg>
<svg style="left:1042px;top:224px;" width="29" height="29" viewBox="0 0 100 100"><path d="M12 0 Q4 0 1 8 Q-1 14 3 20 Q16 38 15 48 Q15 60 3 79 Q-1 86 1 92 Q5 100 12 100 Q17 100 22 97 L42 84 L37 72 Q44 78 80 99 Q86 101 92 99 Q99 95 99 88 Q100 83 97 79 Q84 60 83 48 Q84 38 97 20 Q101 13 99 8 Q95 0 88 0 Q83 0 78 3 L58 16 L63 27 Q55 22 18 1.5 Q15 0 12 0 Z" fill="#ed7354"/><path d="M50 43 L57 50 L50 57 L43 50 Z" fill="#1f1f1f"/></svg>
<div class="t" style="left:1086px;top:225.05px;font-size:27px;color:#a9a9a9;font-weight:normal;;letter-spacing:0.25px">dim_listings_w_hosts.sql</div>
<div class="t" style="left:838px;top:262.56px;font-size:21.7px;color:#999999;font-weight:normal;">Add documentation or tests</div>
<div class="a" style="left:780px;top:290px;width:6px;height:756px;background:#37373d;"></div>
<div class="a" style="left:840px;top:326px;width:56px;height:36px;background:#2f2f24;"></div>
<div class="a" style="left:838px;top:326px;width:2px;height:36px;background:#8a8a78;"></div>
<div class="a" style="left:840px;top:434px;width:56px;height:36px;background:#2f2f24;"></div>
<div class="a" style="left:838px;top:434px;width:2px;height:36px;background:#8a8a78;"></div>
<div class="a" style="left:840px;top:578px;width:56px;height:36px;background:#2f2f24;"></div>
<div class="a" style="left:838px;top:578px;width:2px;height:36px;background:#8a8a78;"></div>
<div class="a" style="left:840px;top:614px;width:56px;height:36px;background:#2f2f24;"></div>
<div class="a" style="left:838px;top:614px;width:2px;height:36px;background:#8a8a78;"></div>
<div class="a" style="left:840px;top:650px;width:56px;height:36px;background:#2f2f24;"></div>
<div class="a" style="left:838px;top:650px;width:2px;height:36px;background:#8a8a78;"></div>
<div class="a" style="left:840px;top:686px;width:56px;height:36px;background:#2f2f24;"></div>
<div class="a" style="left:838px;top:686px;width:2px;height:36px;background:#8a8a78;"></div>
<div class="a" style="left:840px;top:722px;width:56px;height:36px;background:#2f2f24;"></div>
<div class="a" style="left:838px;top:722px;width:2px;height:36px;background:#8a8a78;"></div>
<div class="a" style="left:840px;top:758px;width:56px;height:36px;background:#2f2f24;"></div>
<div class="a" style="left:838px;top:758px;width:2px;height:36px;background:#8a8a78;"></div>
<div class="a" style="left:840px;top:794px;width:56px;height:36px;background:#2f2f24;"></div>
<div class="a" style="left:838px;top:794px;width:2px;height:36px;background:#8a8a78;"></div>
<div class="a" style="left:840px;top:830px;width:56px;height:36px;background:#2f2f24;"></div>
<div class="a" style="left:838px;top:830px;width:2px;height:36px;background:#8a8a78;"></div>
<div class="a" style="left:840px;top:866px;width:56px;height:36px;background:#2f2f24;"></div>
<div class="a" style="left:838px;top:866px;width:2px;height:36px;background:#8a8a78;"></div>
<div class="a" style="left:840px;top:902px;width:56px;height:36px;background:#2f2f24;"></div>
<div class="a" style="left:838px;top:902px;width:2px;height:36px;background:#8a8a78;"></div>
<div class="a" style="left:840px;top:650px;width:1944px;height:36px;border-top:4px solid rgba(255,255,255,0.04);border-bottom:4px solid rgba(255,255,255,0.04)"></div>
<div class="a" style="left:764px;top:578px;width:38px;height:36px;background:#39393f;border-radius:7px"></div>
<svg style="left:772px;top:584px;" width="22" height="22" viewBox="0 0 22 22"><path d="M1 11 H21 M11 1 V21" stroke="#e6e6e6" stroke-width="2"/></svg>
<div class="t mono" style="left:660px;width:100px;text-align:right;top:292px;font-size:24px;line-height:36px;color:#6e7681">1</div>
<div class="t mono" style="left:838px;top:292px;font-size:24px;line-height:36px;letter-spacing:0.05px"><span style="color:#569cd6">with</span><span style="color:#d4d4d4"> l </span><span style="color:#569cd6">as</span><span style="color:#d4d4d4"> </span><span style="color:#ffd700">(</span></div>
<div class="t mono" style="left:660px;width:100px;text-align:right;top:328px;font-size:24px;line-height:36px;color:#6e7681">2</div>
<div class="t mono" style="left:838px;top:328px;font-size:24px;line-height:36px;letter-spacing:0.05px"><span style="color:#d4d4d4">    </span><span style="color:#569cd6">select</span><span style="color:#d4d4d4"> * </span><span style="color:#569cd6">from</span><span style="color:#d4d4d4"> </span><span style="color:#da70d6">{{</span><span style="color:#d4d4d4"> </span><span style="color:#9cdcfe">ref</span><span style="color:#179fff">(</span><span style="color:#ce9178">&#x27;dim_listings_cleansed&#x27;</span><span style="color:#179fff">)</span><span style="color:#d4d4d4"> </span><span style="color:#da70d6">}}</span></div>
<div class="t mono" style="left:660px;width:100px;text-align:right;top:364px;font-size:24px;line-height:36px;color:#6e7681">3</div>
<div class="t mono" style="left:838px;top:364px;font-size:24px;line-height:36px;letter-spacing:0.05px"><span style="color:#ffd700">)</span><span style="color:#d4d4d4">,</span></div>
<div class="t mono" style="left:660px;width:100px;text-align:right;top:400px;font-size:24px;line-height:36px;color:#6e7681">4</div>
<div class="t mono" style="left:838px;top:400px;font-size:24px;line-height:36px;letter-spacing:0.05px"><span style="color:#d4d4d4">h </span><span style="color:#569cd6">as</span><span style="color:#d4d4d4"> </span><span style="color:#ffd700">(</span></div>
<div class="t mono" style="left:660px;width:100px;text-align:right;top:436px;font-size:24px;line-height:36px;color:#6e7681">5</div>
<div class="t mono" style="left:838px;top:436px;font-size:24px;line-height:36px;letter-spacing:0.05px"><span style="color:#d4d4d4">    </span><span style="color:#569cd6">select</span><span style="color:#d4d4d4"> * </span><span style="color:#569cd6">from</span><span style="color:#d4d4d4"> </span><span style="color:#da70d6">{{</span><span style="color:#d4d4d4"> </span><span style="color:#9cdcfe">ref</span><span style="color:#179fff">(</span><span style="color:#ce9178">&#x27;dim_hosts_cleansed&#x27;</span><span style="color:#179fff">)</span><span style="color:#d4d4d4"> </span><span style="color:#da70d6">}}</span></div>
<div class="t mono" style="left:660px;width:100px;text-align:right;top:472px;font-size:24px;line-height:36px;color:#6e7681">6</div>
<div class="t mono" style="left:838px;top:472px;font-size:24px;line-height:36px;letter-spacing:0.05px"><span style="color:#ffd700">)</span></div>
<div class="t mono" style="left:660px;width:100px;text-align:right;top:508px;font-size:24px;line-height:36px;color:#6e7681">7</div>
<div class="t mono" style="left:660px;width:100px;text-align:right;top:544px;font-size:24px;line-height:36px;color:#6e7681">8</div>
<div class="t mono" style="left:838px;top:544px;font-size:24px;line-height:36px;letter-spacing:0.05px"><span style="color:#569cd6">select</span></div>
<div class="t mono" style="left:660px;width:100px;text-align:right;top:580px;font-size:24px;line-height:36px;color:#6e7681">9</div>
<div class="t mono" style="left:838px;top:580px;font-size:24px;line-height:36px;letter-spacing:0.05px"><span style="color:#d4d4d4">    l.listing_id,</span></div>
<div class="t mono" style="left:660px;width:100px;text-align:right;top:616px;font-size:24px;line-height:36px;color:#6e7681">10</div>
<div class="t mono" style="left:838px;top:616px;font-size:24px;line-height:36px;letter-spacing:0.05px"><span style="color:#d4d4d4">    l.listing_name,</span></div>
<div class="t mono" style="left:660px;width:100px;text-align:right;top:652px;font-size:24px;line-height:36px;color:#cccccc">11</div>
<div class="t mono" style="left:838px;top:652px;font-size:24px;line-height:36px;letter-spacing:0.05px"><span style="color:#d4d4d4">    l.room_type,</span></div>
<div class="t mono" style="left:660px;width:100px;text-align:right;top:688px;font-size:24px;line-height:36px;color:#6e7681">12</div>
<div class="t mono" style="left:838px;top:688px;font-size:24px;line-height:36px;letter-spacing:0.05px"><span style="color:#d4d4d4">    l.minimum_nights,</span></div>
<div class="t mono" style="left:660px;width:100px;text-align:right;top:724px;font-size:24px;line-height:36px;color:#6e7681">13</div>
<div class="t mono" style="left:838px;top:724px;font-size:24px;line-height:36px;letter-spacing:0.05px"><span style="color:#d4d4d4">    l.price,</span></div>
<div class="t mono" style="left:660px;width:100px;text-align:right;top:760px;font-size:24px;line-height:36px;color:#6e7681">14</div>
<div class="t mono" style="left:838px;top:760px;font-size:24px;line-height:36px;letter-spacing:0.05px"><span style="color:#d4d4d4">    l.host_id,</span></div>
<div class="t mono" style="left:660px;width:100px;text-align:right;top:796px;font-size:24px;line-height:36px;color:#6e7681">15</div>
<div class="t mono" style="left:838px;top:796px;font-size:24px;line-height:36px;letter-spacing:0.05px"><span style="color:#d4d4d4">    h.host_name,</span></div>
<div class="t mono" style="left:660px;width:100px;text-align:right;top:832px;font-size:24px;line-height:36px;color:#6e7681">16</div>
<div class="t mono" style="left:838px;top:832px;font-size:24px;line-height:36px;letter-spacing:0.05px"><span style="color:#d4d4d4">    h.is_superhost </span><span style="color:#569cd6">as</span><span style="color:#d4d4d4"> host_is_superhost,</span></div>
<div class="t mono" style="left:660px;width:100px;text-align:right;top:868px;font-size:24px;line-height:36px;color:#6e7681">17</div>
<div class="t mono" style="left:838px;top:868px;font-size:24px;line-height:36px;letter-spacing:0.05px"><span style="color:#d4d4d4">    l.created_at,</span></div>
<div class="t mono" style="left:660px;width:100px;text-align:right;top:904px;font-size:24px;line-height:36px;color:#6e7681">18</div>
<div class="t mono" style="left:838px;top:904px;font-size:24px;line-height:36px;letter-spacing:0.05px"><span style="color:#d4d4d4">    </span><span style="color:#f3a536">GREATEST</span><span style="color:#ffd700">(</span><span style="color:#d4d4d4">l.updated_at, h.updated_at</span><span style="color:#ffd700">)</span><span style="color:#d4d4d4"> </span><span style="color:#569cd6">as</span><span style="color:#d4d4d4"> updated_at</span></div>
<div class="t mono" style="left:660px;width:100px;text-align:right;top:940px;font-size:24px;line-height:36px;color:#6e7681">19</div>
<div class="t mono" style="left:838px;top:940px;font-size:24px;line-height:36px;letter-spacing:0.05px"><span style="color:#569cd6">from</span><span style="color:#d4d4d4"> l</span></div>
<div class="t mono" style="left:660px;width:100px;text-align:right;top:976px;font-size:24px;line-height:36px;color:#6e7681">20</div>
<div class="t mono" style="left:838px;top:976px;font-size:24px;line-height:36px;letter-spacing:0.05px"><span style="color:#569cd6">left</span><span style="color:#d4d4d4"> </span><span style="color:#569cd6">join</span><span style="color:#d4d4d4"> h </span><span style="color:#569cd6">on</span><span style="color:#d4d4d4"> </span><span style="color:#ffd700">(</span><span style="color:#d4d4d4">h.host_id = l.host_id</span><span style="color:#ffd700">)</span></div>
<div class="t mono" style="left:660px;width:100px;text-align:right;top:1012px;font-size:24px;line-height:36px;color:#6e7681">21</div>
<svg style="left:968px;top:859px;" width="130" height="6" viewBox="0 0 130 6"><path d="M0 5 L5 1 L10 5 L15 1 L20 5 L25 1 L30 5 L35 1 L40 5 L45 1 L50 5 L55 1 L60 5 L65 1 L70 5 L75 1 L80 5 L85 1 L90 5 L95 1 L100 5 L105 1 L110 5 L115 1 L120 5 L125 1 L130 5" fill="none" stroke="#3d8bf2" stroke-width="1.8"/></svg>
<svg style="left:1271px;top:859px;" width="130" height="6" viewBox="0 0 130 6"><path d="M0 5 L5 1 L10 5 L15 1 L20 5 L25 1 L30 5 L35 1 L40 5 L45 1 L50 5 L55 1 L60 5 L65 1 L70 5 L75 1 L80 5 L85 1 L90 5 L95 1 L100 5 L105 1 L110 5 L115 1 L120 5 L125 1 L130 5" fill="none" stroke="#3d8bf2" stroke-width="1.8"/></svg>
<div class="a" style="left:2792px;top:259px;width:8px;height:3px;background:#569cd6;opacity:0.42"></div>
<div class="a" style="left:2802px;top:259px;width:2px;height:3px;background:#d4d4d4;opacity:0.42"></div>
<div class="a" style="left:2806px;top:259px;width:4px;height:3px;background:#569cd6;opacity:0.42"></div>
<div class="a" style="left:2812px;top:259px;width:2px;height:3px;background:#ffd700;opacity:0.42"></div>
<div class="a" style="left:2800px;top:263px;width:12px;height:3px;background:#569cd6;opacity:0.42"></div>
<div class="a" style="left:2814px;top:263px;width:2px;height:3px;background:#d4d4d4;opacity:0.42"></div>
<div class="a" style="left:2818px;top:263px;width:8px;height:3px;background:#569cd6;opacity:0.42"></div>
<div class="a" style="left:2828px;top:263px;width:4px;height:3px;background:#da70d6;opacity:0.42"></div>
<div class="a" style="left:2834px;top:263px;width:6px;height:3px;background:#9cdcfe;opacity:0.42"></div>
<div class="a" style="left:2840px;top:263px;width:2px;height:3px;background:#179fff;opacity:0.42"></div>
<div class="a" style="left:2842px;top:263px;width:46px;height:3px;background:#ce9178;opacity:0.42"></div>
<div class="a" style="left:2888px;top:263px;width:2px;height:3px;background:#179fff;opacity:0.42"></div>
<div class="a" style="left:2892px;top:263px;width:4px;height:3px;background:#da70d6;opacity:0.42"></div>
<div class="a" style="left:2792px;top:267px;width:2px;height:3px;background:#ffd700;opacity:0.42"></div>
<div class="a" style="left:2794px;top:267px;width:2px;height:3px;background:#d4d4d4;opacity:0.42"></div>
<div class="a" style="left:2792px;top:271px;width:2px;height:3px;background:#d4d4d4;opacity:0.42"></div>
<div class="a" style="left:2796px;top:271px;width:4px;height:3px;background:#569cd6;opacity:0.42"></div>
<div class="a" style="left:2802px;top:271px;width:2px;height:3px;background:#ffd700;opacity:0.42"></div>
<div class="a" style="left:2800px;top:275px;width:12px;height:3px;background:#569cd6;opacity:0.42"></div>
<div class="a" style="left:2814px;top:275px;width:2px;height:3px;background:#d4d4d4;opacity:0.42"></div>
<div class="a" style="left:2818px;top:275px;width:8px;height:3px;background:#569cd6;opacity:0.42"></div>
<div class="a" style="left:2828px;top:275px;width:4px;height:3px;background:#da70d6;opacity:0.42"></div>
<div class="a" style="left:2834px;top:275px;width:6px;height:3px;background:#9cdcfe;opacity:0.42"></div>
<div class="a" style="left:2840px;top:275px;width:2px;height:3px;background:#179fff;opacity:0.42"></div>
<div class="a" style="left:2842px;top:275px;width:40px;height:3px;background:#ce9178;opacity:0.42"></div>
<div class="a" style="left:2882px;top:275px;width:2px;height:3px;background:#179fff;opacity:0.42"></div>
<div class="a" style="left:2886px;top:275px;width:4px;height:3px;background:#da70d6;opacity:0.42"></div>
<div class="a" style="left:2792px;top:279px;width:2px;height:3px;background:#ffd700;opacity:0.42"></div>
<div class="a" style="left:2792px;top:287px;width:12px;height:3px;background:#569cd6;opacity:0.42"></div>
<div class="a" style="left:2800px;top:291px;width:26px;height:3px;background:#d4d4d4;opacity:0.42"></div>
<div class="a" style="left:2800px;top:295px;width:30px;height:3px;background:#d4d4d4;opacity:0.42"></div>
<div class="a" style="left:2800px;top:299px;width:24px;height:3px;background:#d4d4d4;opacity:0.42"></div>
<div class="a" style="left:2800px;top:303px;width:34px;height:3px;background:#d4d4d4;opacity:0.42"></div>
<div class="a" style="left:2800px;top:307px;width:16px;height:3px;background:#d4d4d4;opacity:0.42"></div>
<div class="a" style="left:2800px;top:311px;width:20px;height:3px;background:#d4d4d4;opacity:0.42"></div>
<div class="a" style="left:2800px;top:315px;width:24px;height:3px;background:#d4d4d4;opacity:0.42"></div>
<div class="a" style="left:2800px;top:319px;width:28px;height:3px;background:#d4d4d4;opacity:0.42"></div>
<div class="a" style="left:2830px;top:319px;width:4px;height:3px;background:#569cd6;opacity:0.42"></div>
<div class="a" style="left:2836px;top:319px;width:36px;height:3px;background:#d4d4d4;opacity:0.42"></div>
<div class="a" style="left:2800px;top:323px;width:26px;height:3px;background:#d4d4d4;opacity:0.42"></div>
<div class="a" style="left:2800px;top:327px;width:16px;height:3px;background:#f3a536;opacity:0.42"></div>
<div class="a" style="left:2816px;top:327px;width:2px;height:3px;background:#ffd700;opacity:0.42"></div>
<div class="a" style="left:2818px;top:327px;width:26px;height:3px;background:#d4d4d4;opacity:0.42"></div>
<div class="a" style="left:2846px;top:327px;width:24px;height:3px;background:#d4d4d4;opacity:0.42"></div>
<div class="a" style="left:2870px;top:327px;width:2px;height:3px;background:#ffd700;opacity:0.42"></div>
<div class="a" style="left:2874px;top:327px;width:4px;height:3px;background:#569cd6;opacity:0.42"></div>
<div class="a" style="left:2880px;top:327px;width:20px;height:3px;background:#d4d4d4;opacity:0.42"></div>
<div class="a" style="left:2792px;top:331px;width:8px;height:3px;background:#569cd6;opacity:0.42"></div>
<div class="a" style="left:2802px;top:331px;width:2px;height:3px;background:#d4d4d4;opacity:0.42"></div>
<div class="a" style="left:2792px;top:335px;width:8px;height:3px;background:#569cd6;opacity:0.42"></div>
<div class="a" style="left:2802px;top:335px;width:8px;height:3px;background:#569cd6;opacity:0.42"></div>
<div class="a" style="left:2812px;top:335px;width:2px;height:3px;background:#d4d4d4;opacity:0.42"></div>
<div class="a" style="left:2816px;top:335px;width:4px;height:3px;background:#569cd6;opacity:0.42"></div>
<div class="a" style="left:2822px;top:335px;width:2px;height:3px;background:#ffd700;opacity:0.42"></div>
<div class="a" style="left:2824px;top:335px;width:18px;height:3px;background:#d4d4d4;opacity:0.42"></div>
<div class="a" style="left:2844px;top:335px;width:2px;height:3px;background:#d4d4d4;opacity:0.42"></div>
<div class="a" style="left:2848px;top:335px;width:18px;height:3px;background:#d4d4d4;opacity:0.42"></div>
<div class="a" style="left:2866px;top:335px;width:2px;height:3px;background:#ffd700;opacity:0.42"></div>
<div class="a" style="left:2792px;top:320px;width:1232px;height:4px;background:#3b5e98;"></div>
<div class="a" style="left:2810px;top:320px;width:18px;height:4px;background:#4a8ae8;"></div>
<div class="a" style="left:2852px;top:320px;width:18px;height:4px;background:#4a8ae8;"></div>
<div class="a" style="left:3024px;top:260px;width:26px;height:430px;background:#434343;"></div>
<div class="a" style="left:3025px;top:462px;width:25px;height:4px;background:#8a8a8a;"></div>
<div class="a" style="left:3043px;top:558px;width:7px;height:19px;background:#5d8fd9;"></div>
<div class="a" style="left:3024px;top:690px;width:1px;height:394px;background:#171717;"></div>
<div class="t" style="left:721px;top:1109.98px;font-size:21.2px;color:#9d9d9d;font-weight:normal;letter-spacing:0.1px">PROBLEMS</div>
<div class="t" style="left:940px;top:1109.98px;font-size:21.2px;color:#9d9d9d;font-weight:normal;letter-spacing:0.7px">OUTPUT</div>
<div class="t" style="left:1080px;top:1109.98px;font-size:21.2px;color:#9d9d9d;font-weight:normal;letter-spacing:0.35px">DEBUG CONSOLE</div>
<div class="t" style="left:1318px;top:1109.98px;font-size:21.2px;color:#9d9d9d;font-weight:normal;letter-spacing:0.4px">TERMINAL</div>
<div class="t" style="left:1477px;top:1109.98px;font-size:21.2px;color:#9d9d9d;font-weight:normal;letter-spacing:0.1px">SPELL CHECKER</div>
<div class="t" style="left:1754px;top:1109.98px;font-size:21.2px;color:#9d9d9d;font-weight:normal;letter-spacing:0.1px">PORTS</div>
<div class="t" style="left:1876px;top:1109.98px;font-size:21.2px;color:#e7e7e7;font-weight:normal;letter-spacing:0.05px">QUERY RESULTS</div>
<div class="t" style="left:2102px;top:1109.98px;font-size:21.2px;color:#9d9d9d;font-weight:normal;letter-spacing:0.1px">LINEAGE</div>
<div class="t" style="left:2243px;top:1109.98px;font-size:21.2px;color:#9d9d9d;font-weight:normal;letter-spacing:0.45px">DOCUMENTATION EDITOR</div>
<div class="t" style="left:2571px;top:1109.98px;font-size:21.2px;color:#9d9d9d;font-weight:normal;letter-spacing:0.35px">ACTIONS</div>
<div class="t" style="left:2716px;top:1109.98px;font-size:21.2px;color:#9d9d9d;font-weight:normal;letter-spacing:0.65px">COMMENTS</div>
<div class="a" style="left:860px;top:1102px;width:36px;height:36px;border-radius:50%;background:#616161"></div>
<div class="t" style="left:871.5px;top:1109.30px;font-size:22px;color:#ffffff;font-weight:normal;">9</div>
<div class="a" style="left:1674px;top:1102px;width:36px;height:36px;border-radius:50%;background:#616161"></div>
<div class="t" style="left:1685.5px;top:1109.30px;font-size:22px;color:#ffffff;font-weight:normal;">9</div>
<div class="a" style="left:1871px;top:1140px;width:187px;height:3px;background:#3b82e0;"></div>
<svg style="left:2942px;top:1112px;" width="24" height="14" viewBox="0 0 24 14"><path d="M2 12 L12 2 L22 12" fill="none" stroke="#cccccc" stroke-width="2.2"/></svg>
<svg style="left:2996px;top:1109px;" width="20" height="20" viewBox="0 0 20 20"><path d="M2 2 L18 18 M18 2 L2 18" stroke="#cccccc" stroke-width="2.2" fill="none"/></svg>
<div class="t" style="left:720px;top:1187.05px;font-size:27px;color:#e8e8e8;font-weight:normal;;letter-spacing:0.25px">Preview 500 rows in 3.8s</div>
<div class="t" style="left:1074px;top:1187.05px;font-size:27px;color:#e8e8e8;font-weight:normal;;letter-spacing:0.25px">SQL</div>
<div class="t" style="left:1177px;top:1187.05px;font-size:27px;color:#e8e8e8;font-weight:normal;;letter-spacing:0.25px">History</div>
<div class="t" style="left:1316px;top:1187.05px;font-size:27px;color:#e8e8e8;font-weight:normal;;letter-spacing:0.25px">Bookmarks</div>
<div class="a" style="left:693px;top:1235px;width:354px;height:4px;background:#e8e8e8;border-radius:2px"></div>
<div class="a" style="left:693px;top:1252px;width:1561px;height:489px;background:#1f1f1f;"></div>
<div class="a" style="left:2252px;top:1252px;width:2px;height:489px;background:#161616;"></div>
<div class="a" style="left:722px;top:1293px;width:18px;height:18px;border-radius:50%;background:#58a55c"></div>
<div class="t" style="left:769px;top:1283.95px;font-size:33px;color:#c9ccd1;font-weight:normal;">query result</div>
<div class="t" style="left:988px;top:1284.38px;font-size:32.5px;color:#c9ccd1;font-weight:normal;">500 x 10</div>
<div class="a" style="left:717px;top:1348px;width:1537px;height:2px;background:#d4d4d4;"></div>
<div class="a" style="left:717px;top:1372px;width:1537px;height:53px;background:#ffffff;"></div>
<div class="a" style="left:717px;top:1425px;width:1537px;height:6px;background:#5cb85c;"></div>
<div class="a" style="left:920px;top:1372px;width:2px;height:53px;background:#d0d0d0;"></div>
<div class="a" style="left:1320px;top:1372px;width:2px;height:53px;background:#d0d0d0;"></div>
<div class="a" style="left:1564px;top:1372px;width:2px;height:53px;background:#d0d0d0;"></div>
<div class="a" style="left:1864px;top:1372px;width:2px;height:53px;background:#d0d0d0;"></div>
<div class="a" style="left:1996px;top:1372px;width:2px;height:53px;background:#d0d0d0;"></div>
<div class="a" style="left:2167px;top:1372px;width:2px;height:53px;background:#d0d0d0;"></div>
<div class="t" style="left:730px;top:1383.97px;font-size:26.5px;color:#1f1f1f;font-weight:bold;">LISTING_ID</div>
<div class="t" style="left:933px;top:1383.97px;font-size:26.5px;color:#1f1f1f;font-weight:bold;">LISTING_NAME</div>
<div class="t" style="left:1333px;top:1383.97px;font-size:26.5px;color:#1f1f1f;font-weight:bold;">ROOM_TYPE</div>
<div class="t" style="left:1576px;top:1383.97px;font-size:26.5px;color:#1f1f1f;font-weight:bold;">MINIMUM_NIGHTS</div>
<div class="t" style="left:1877px;top:1383.97px;font-size:26.5px;color:#1f1f1f;font-weight:bold;">PRICE</div>
<div class="t" style="left:2009px;top:1383.97px;font-size:26.5px;color:#1f1f1f;font-weight:bold;">HOST_ID</div>
<div class="t" style="left:2180px;top:1383.97px;font-size:26.5px;color:#1f1f1f;font-weight:bold;">HOST_NAME</div>
<div class="a" style="left:693px;top:1431px;width:1561px;height:310px;overflow:hidden">
<div class="a" style="left:24px;top:0.00px;width:1537px;height:46.00px;background:#1e1e1e;"></div>
<div class="a" style="left:24px;top:46.00px;width:1537px;height:2.00px;background:#d8d8d8;"></div>
<div class="t" style="left:-114px;width:300px;text-align:right;top:11.90px;font-size:26px;color:#4f95dc">3176</div>
<div class="t" style="left:240px;top:11.47px;font-size:26.5px;color:#d0d4da;font-weight:normal;">Fabulous Flat in great Loca...</div>
<svg style="left:591px;top:12.00px" width="24" height="24" viewBox="0 0 24 24"><path d="M10 3 H3 V21 H21 V14" fill="none" stroke="#d0d4da" stroke-width="2.2"/><path d="M11 13 L22 2 M14 2 H22 V10" fill="none" stroke="#d0d4da" stroke-width="2.2"/></svg>
<div class="t" style="left:640px;top:11.47px;font-size:26.5px;color:#d0d4da;font-weight:normal;">Entire home/apt</div>
<svg style="left:835px;top:12.00px" width="24" height="24" viewBox="0 0 24 24"><path d="M10 3 H3 V21 H21 V14" fill="none" stroke="#d0d4da" stroke-width="2.2"/><path d="M11 13 L22 2 M14 2 H22 V10" fill="none" stroke="#d0d4da" stroke-width="2.2"/></svg>
<div class="t" style="left:830px;width:300px;text-align:right;top:11.90px;font-size:26px;color:#4f95dc">62</div>
<div class="t" style="left:962px;width:300px;text-align:right;top:11.90px;font-size:26px;color:#4f95dc">90</div>
<div class="t" style="left:1133px;width:300px;text-align:right;top:11.90px;font-size:26px;color:#4f95dc">3718</div>
<div class="t" style="left:1487px;top:11.47px;font-size:26.5px;color:#d0d4da;font-weight:normal;">Britta</div>
<div class="a" style="left:24px;top:48.00px;width:1537px;height:44.70px;background:#3c3c3c;"></div>
<div class="a" style="left:24px;top:92.70px;width:1537px;height:2.00px;background:#d8d8d8;"></div>
<div class="t" style="left:-114px;width:300px;text-align:right;top:58.60px;font-size:26px;color:#4f95dc">7071</div>
<div class="t" style="left:240px;top:58.17px;font-size:26.5px;color:#d0d4da;font-weight:normal;">BrightRoom with sunny gre...</div>
<svg style="left:591px;top:58.70px" width="24" height="24" viewBox="0 0 24 24"><path d="M10 3 H3 V21 H21 V14" fill="none" stroke="#d0d4da" stroke-width="2.2"/><path d="M11 13 L22 2 M14 2 H22 V10" fill="none" stroke="#d0d4da" stroke-width="2.2"/></svg>
<div class="t" style="left:640px;top:58.17px;font-size:26.5px;color:#d0d4da;font-weight:normal;">Private room</div>
<svg style="left:835px;top:58.70px" width="24" height="24" viewBox="0 0 24 24"><path d="M10 3 H3 V21 H21 V14" fill="none" stroke="#d0d4da" stroke-width="2.2"/><path d="M11 13 L22 2 M14 2 H22 V10" fill="none" stroke="#d0d4da" stroke-width="2.2"/></svg>
<div class="t" style="left:830px;width:300px;text-align:right;top:58.60px;font-size:26px;color:#4f95dc">1</div>
<div class="t" style="left:962px;width:300px;text-align:right;top:58.60px;font-size:26px;color:#4f95dc">33</div>
<div class="t" style="left:1133px;width:300px;text-align:right;top:58.60px;font-size:26px;color:#4f95dc">17391</div>
<div class="t" style="left:1487px;top:58.17px;font-size:26.5px;color:#d0d4da;font-weight:normal;">BrightRoom</div>
<div class="a" style="left:24px;top:94.70px;width:1537px;height:44.70px;background:#1e1e1e;"></div>
<div class="a" style="left:24px;top:139.40px;width:1537px;height:2.00px;background:#d8d8d8;"></div>
<div class="t" style="left:-114px;width:300px;text-align:right;top:105.30px;font-size:26px;color:#4f95dc">9991</div>
<div class="t" style="left:240px;top:104.88px;font-size:26.5px;color:#d0d4da;font-weight:normal;">Geourgeous flat - outstan...</div>
<svg style="left:591px;top:105.40px" width="24" height="24" viewBox="0 0 24 24"><path d="M10 3 H3 V21 H21 V14" fill="none" stroke="#d0d4da" stroke-width="2.2"/><path d="M11 13 L22 2 M14 2 H22 V10" fill="none" stroke="#d0d4da" stroke-width="2.2"/></svg>
<div class="t" style="left:640px;top:104.88px;font-size:26.5px;color:#d0d4da;font-weight:normal;">Entire home/apt</div>
<svg style="left:835px;top:105.40px" width="24" height="24" viewBox="0 0 24 24"><path d="M10 3 H3 V21 H21 V14" fill="none" stroke="#d0d4da" stroke-width="2.2"/><path d="M11 13 L22 2 M14 2 H22 V10" fill="none" stroke="#d0d4da" stroke-width="2.2"/></svg>
<div class="t" style="left:830px;width:300px;text-align:right;top:105.30px;font-size:26px;color:#4f95dc">1</div>
<div class="t" style="left:962px;width:300px;text-align:right;top:105.30px;font-size:26px;color:#4f95dc">180</div>
<div class="t" style="left:1133px;width:300px;text-align:right;top:105.30px;font-size:26px;color:#4f95dc">33852</div>
<div class="t" style="left:1487px;top:104.88px;font-size:26.5px;color:#d0d4da;font-weight:normal;">Philipp</div>
<div class="a" style="left:24px;top:141.40px;width:1537px;height:44.70px;background:#3c3c3c;"></div>
<div class="a" style="left:24px;top:186.10px;width:1537px;height:2.00px;background:#d8d8d8;"></div>
<div class="t" style="left:-114px;width:300px;text-align:right;top:152.00px;font-size:26px;color:#4f95dc">14325</div>
<div class="t" style="left:240px;top:151.57px;font-size:26.5px;color:#d0d4da;font-weight:normal;">Apartment in Prenzlauer B...</div>
<svg style="left:591px;top:152.10px" width="24" height="24" viewBox="0 0 24 24"><path d="M10 3 H3 V21 H21 V14" fill="none" stroke="#d0d4da" stroke-width="2.2"/><path d="M11 13 L22 2 M14 2 H22 V10" fill="none" stroke="#d0d4da" stroke-width="2.2"/></svg>
<div class="t" style="left:640px;top:151.57px;font-size:26.5px;color:#d0d4da;font-weight:normal;">Entire home/apt</div>
<svg style="left:835px;top:152.10px" width="24" height="24" viewBox="0 0 24 24"><path d="M10 3 H3 V21 H21 V14" fill="none" stroke="#d0d4da" stroke-width="2.2"/><path d="M11 13 L22 2 M14 2 H22 V10" fill="none" stroke="#d0d4da" stroke-width="2.2"/></svg>
<div class="t" style="left:830px;width:300px;text-align:right;top:152.00px;font-size:26px;color:#4f95dc">95</div>
<div class="t" style="left:962px;width:300px;text-align:right;top:152.00px;font-size:26px;color:#4f95dc">70</div>
<div class="t" style="left:1133px;width:300px;text-align:right;top:152.00px;font-size:26px;color:#4f95dc">55531</div>
<div class="t" style="left:1487px;top:151.57px;font-size:26.5px;color:#d0d4da;font-weight:normal;">Chris + Oliver</div>
<div class="a" style="left:24px;top:188.10px;width:1537px;height:44.70px;background:#1e1e1e;"></div>
<div class="a" style="left:24px;top:232.80px;width:1537px;height:2.00px;background:#d8d8d8;"></div>
<div class="t" style="left:-114px;width:300px;text-align:right;top:198.70px;font-size:26px;color:#4f95dc">16644</div>
<div class="t" style="left:240px;top:198.27px;font-size:26.5px;color:#d0d4da;font-weight:normal;">In the Heart of Berlin - Kre...</div>
<svg style="left:591px;top:198.80px" width="24" height="24" viewBox="0 0 24 24"><path d="M10 3 H3 V21 H21 V14" fill="none" stroke="#d0d4da" stroke-width="2.2"/><path d="M11 13 L22 2 M14 2 H22 V10" fill="none" stroke="#d0d4da" stroke-width="2.2"/></svg>
<div class="t" style="left:640px;top:198.27px;font-size:26.5px;color:#d0d4da;font-weight:normal;">Entire home/apt</div>
<svg style="left:835px;top:198.80px" width="24" height="24" viewBox="0 0 24 24"><path d="M10 3 H3 V21 H21 V14" fill="none" stroke="#d0d4da" stroke-width="2.2"/><path d="M11 13 L22 2 M14 2 H22 V10" fill="none" stroke="#d0d4da" stroke-width="2.2"/></svg>
<div class="t" style="left:830px;width:300px;text-align:right;top:198.70px;font-size:26px;color:#4f95dc">60</div>
<div class="t" style="left:962px;width:300px;text-align:right;top:198.70px;font-size:26px;color:#4f95dc">90</div>
<div class="t" style="left:1133px;width:300px;text-align:right;top:198.70px;font-size:26px;color:#4f95dc">64696</div>
<div class="t" style="left:1487px;top:198.27px;font-size:26.5px;color:#d0d4da;font-weight:normal;">Rene</div>
<div class="a" style="left:24px;top:234.80px;width:1537px;height:44.70px;background:#3c3c3c;"></div>
<div class="a" style="left:24px;top:279.50px;width:1537px;height:2.00px;background:#d8d8d8;"></div>
<div class="t" style="left:-114px;width:300px;text-align:right;top:245.40px;font-size:26px;color:#4f95dc">17904</div>
<div class="t" style="left:240px;top:244.97px;font-size:26.5px;color:#d0d4da;font-weight:normal;">Beautiful Kreuzberg studio...</div>
<svg style="left:591px;top:245.50px" width="24" height="24" viewBox="0 0 24 24"><path d="M10 3 H3 V21 H21 V14" fill="none" stroke="#d0d4da" stroke-width="2.2"/><path d="M11 13 L22 2 M14 2 H22 V10" fill="none" stroke="#d0d4da" stroke-width="2.2"/></svg>
<div class="t" style="left:640px;top:244.97px;font-size:26.5px;color:#d0d4da;font-weight:normal;">Entire home/apt</div>
<svg style="left:835px;top:245.50px" width="24" height="24" viewBox="0 0 24 24"><path d="M10 3 H3 V21 H21 V14" fill="none" stroke="#d0d4da" stroke-width="2.2"/><path d="M11 13 L22 2 M14 2 H22 V10" fill="none" stroke="#d0d4da" stroke-width="2.2"/></svg>
<div class="t" style="left:830px;width:300px;text-align:right;top:245.40px;font-size:26px;color:#4f95dc">92</div>
<div class="t" style="left:962px;width:300px;text-align:right;top:245.40px;font-size:26px;color:#4f95dc">47</div>
<div class="t" style="left:1133px;width:300px;text-align:right;top:245.40px;font-size:26px;color:#4f95dc">68997</div>
<div class="t" style="left:1487px;top:244.97px;font-size:26.5px;color:#d0d4da;font-weight:normal;">Matthias</div>
<div class="a" style="left:24px;top:281.50px;width:1537px;height:44.70px;background:#1e1e1e;"></div>
<div class="a" style="left:24px;top:326.20px;width:1537px;height:2.00px;background:#d8d8d8;"></div>
<div class="t" style="left:-114px;width:300px;text-align:right;top:292.10px;font-size:26px;color:#4f95dc">20858</div>
<div class="t" style="left:240px;top:291.67px;font-size:26.5px;color:#d0d4da;font-weight:normal;">Designer Loft in Berlin Mitte...</div>
<svg style="left:591px;top:292.20px" width="24" height="24" viewBox="0 0 24 24"><path d="M10 3 H3 V21 H21 V14" fill="none" stroke="#d0d4da" stroke-width="2.2"/><path d="M11 13 L22 2 M14 2 H22 V10" fill="none" stroke="#d0d4da" stroke-width="2.2"/></svg>
<div class="t" style="left:640px;top:291.67px;font-size:26.5px;color:#d0d4da;font-weight:normal;">Entire home/apt</div>
<svg style="left:835px;top:292.20px" width="24" height="24" viewBox="0 0 24 24"><path d="M10 3 H3 V21 H21 V14" fill="none" stroke="#d0d4da" stroke-width="2.2"/><path d="M11 13 L22 2 M14 2 H22 V10" fill="none" stroke="#d0d4da" stroke-width="2.2"/></svg>
<div class="t" style="left:830px;width:300px;text-align:right;top:292.10px;font-size:26px;color:#4f95dc">3</div>
<div class="t" style="left:962px;width:300px;text-align:right;top:292.10px;font-size:26px;color:#4f95dc">169</div>
<div class="t" style="left:1133px;width:300px;text-align:right;top:292.10px;font-size:26px;color:#4f95dc">71331</div>
<div class="t" style="left:1487px;top:291.67px;font-size:26.5px;color:#d0d4da;font-weight:normal;">Marc</div>
<div class="a" style="left:24px;top:0.00px;width:2px;height:320.00px;background:#d8d8d8;"></div>
<div class="a" style="left:227px;top:0.00px;width:2px;height:320.00px;background:#d8d8d8;"></div>
<div class="a" style="left:627px;top:0.00px;width:2px;height:320.00px;background:#d8d8d8;"></div>
<div class="a" style="left:871px;top:0.00px;width:2px;height:320.00px;background:#d8d8d8;"></div>
<div class="a" style="left:1171px;top:0.00px;width:2px;height:320.00px;background:#d8d8d8;"></div>
<div class="a" style="left:1303px;top:0.00px;width:2px;height:320.00px;background:#d8d8d8;"></div>
<div class="a" style="left:1474px;top:0.00px;width:2px;height:320.00px;background:#d8d8d8;"></div>
<div class="a" style="left:1561px;top:0.00px;width:2px;height:320.00px;background:#d8d8d8;"></div>
</div>
<div class="a" style="left:2174px;top:1154px;width:80px;height:80px;background:#427ef5;border-radius:6px"></div>
<svg style="left:2209px;top:1183px;" width="12" height="22" viewBox="0 0 12 22"><path d="M1.5 2 L10.5 11 L1.5 20" fill="none" stroke="#f4f4f4" stroke-width="1.7"/></svg>
<div class="a" style="left:2254px;top:1154px;width:798px;height:118px;background:#1f1f1f;"></div>
<div class="a" style="left:2254px;top:1272px;width:798px;height:482px;background:#27282c;"></div>
<div class="t" style="left:2280px;top:1186.67px;font-size:44.5px;color:#ececec;font-weight:normal;transform:scaleX(0.955);transform-origin:0 0;-webkit-text-stroke:1.3px #ececec">LISTING_NAME</div>
<div class="t mono" style="left:2281px;top:1309.67px;font-size:22.8px;color:#e0e0e0;font-weight:normal;">Fabulous Flat in great Location</div>
<div class="a" style="left:112px;top:1756px;width:68px;height:40px;background:#3b7bd4;"></div>
<svg style="left:130px;top:1760px;" width="30" height="30" viewBox="0 0 30 30"><path d="M7 9 L16 17 L7 26" fill="none" stroke="#ffffff" stroke-width="2"/><path d="M24 4 L16 11 L24 18" fill="none" stroke="#ffffff" stroke-width="2"/></svg>
<svg style="left:197px;top:1764px;" width="25" height="25" viewBox="0 0 25 25"><circle cx="12.5" cy="12.5" r="11" fill="none" stroke="#cccccc" stroke-width="2"/><path d="M8 8 L17 17 M17 8 L8 17" stroke="#cccccc" stroke-width="2"/></svg>
<div class="t" style="left:232px;top:1764.33px;font-size:25.5px;color:#cccccc;font-weight:normal;">0</div>
<svg style="left:254px;top:1763px;" width="26" height="25" viewBox="0 0 26 25"><path d="M13 2 L24.5 23 H1.5 Z" fill="none" stroke="#cccccc" stroke-width="2" stroke-linejoin="round"/><path d="M13 9 V16" stroke="#cccccc" stroke-width="2.4"/><circle cx="13" cy="19.5" r="1.4" fill="#cccccc"/></svg>
<div class="t" style="left:288px;top:1764.33px;font-size:25.5px;color:#cccccc;font-weight:normal;">0</div>
<svg style="left:311px;top:1764px;" width="25" height="25" viewBox="0 0 25 25"><circle cx="12.5" cy="12.5" r="11" fill="none" stroke="#cccccc" stroke-width="2"/><path d="M12.5 11 V18" stroke="#cccccc" stroke-width="2.4"/><circle cx="12.5" cy="7.5" r="1.5" fill="#cccccc"/></svg>
<div class="t" style="left:344px;top:1764.33px;font-size:25.5px;color:#cccccc;font-weight:normal;">9</div>
<svg style="left:394px;top:1763px;" width="24" height="26" viewBox="0 0 24 26"><path d="M5 3 Q1 8 5 13 M19 3 Q23 8 19 13 M8 5.5 Q6 8 8 10.5 M16 5.5 Q18 8 16 10.5" fill="none" stroke="#cccccc" stroke-width="1.8"/><circle cx="12" cy="8" r="1.8" fill="#cccccc"/><path d="M12 10 L6 25 M12 10 L18 25 M8 19 H16" fill="none" stroke="#cccccc" stroke-width="1.8"/></svg>
<div class="t" style="left:427px;top:1764.33px;font-size:25.5px;color:#cccccc;font-weight:normal;">0</div>
<svg style="left:475px;top:1765px;" width="24" height="20" viewBox="0 0 24 20"><path d="M2 11 L8 18 L22 2" fill="none" stroke="#cccccc" stroke-width="2.2"/></svg>
<div class="t" style="left:508px;top:1764.07px;font-size:25.8px;color:#cccccc;font-weight:normal;">dbt core</div>
<svg style="left:636px;top:1764px;" width="25" height="25" viewBox="0 0 25 25"><circle cx="12.5" cy="12.5" r="11" fill="none" stroke="#cccccc" stroke-width="2"/><circle cx="12.5" cy="12.5" r="6" fill="none" stroke="#cccccc" stroke-width="2"/><circle cx="12.5" cy="12.5" r="2" fill="#cccccc"/></svg>
<div class="t" style="left:670px;top:1764.07px;font-size:25.8px;color:#cccccc;font-weight:normal;">dev</div>
<svg style="left:742px;top:1763px;" width="28" height="26" viewBox="0 0 28 26"><path d="M5 14 Q4 6 13 4 Q19 3 23 8 M23 12 Q24 20 15 22 Q9 23 5 18" fill="none" stroke="#cccccc" stroke-width="2"/><path d="M23 2 V8 H17 M5 24 V18 H11" fill="none" stroke="#cccccc" stroke-width="2"/><path d="M3 3 L25 24" stroke="#cccccc" stroke-width="2"/></svg>
<div class="t" style="left:777px;top:1764.07px;font-size:25.8px;color:#cccccc;font-weight:normal;">Defer</div>
<svg style="left:875px;top:1764px;" width="22" height="25" viewBox="0 0 22 25"><rect x="1" y="1" width="20" height="6.5" rx="1" fill="none" stroke="#cccccc" stroke-width="1.8"/><rect x="1" y="9.5" width="20" height="6.5" rx="1" fill="none" stroke="#cccccc" stroke-width="1.8"/><rect x="1" y="18" width="20" height="6.5" rx="1" fill="none" stroke="#cccccc" stroke-width="1.8"/><path d="M5 3 V5 M8 3 V5 M11 3 V5 M14 3 V5 M17 3 V5 M5 11.5 V13.5 M8 11.5 V13.5 M11 11.5 V13.5 M14 11.5 V13.5 M17 11.5 V13.5 M5 20 V22 M8 20 V22 M11 20 V22 M14 20 V22 M17 20 V22" stroke="#cccccc" stroke-width="1.2"/></svg>
<div class="t" style="left:907px;top:1764.58px;font-size:25.2px;color:#cccccc;font-weight:normal;">Select Postgres Server</div>
<div class="t" style="left:2211px;top:1764.15px;font-size:25.7px;color:#cccccc;font-weight:normal;">Ln 11, Col 17</div>
<div class="t" style="left:2396px;top:1764.15px;font-size:25.7px;color:#cccccc;font-weight:normal;">Spaces: 4</div>
<div class="t" style="left:2540px;top:1764.15px;font-size:25.7px;color:#cccccc;font-weight:normal;">UTF-8</div>
<div class="t" style="left:2645px;top:1764.15px;font-size:25.7px;color:#cccccc;font-weight:normal;">LF</div>
<div class="t mono" style="left:2702px;top:1766.28px;font-size:22px;color:#cccccc;font-weight:normal;letter-spacing:-1px">{}</div>
<div class="t" style="left:2740px;top:1764.15px;font-size:25.7px;color:#cccccc;font-weight:normal;">Jinja SQL</div>
<svg style="left:2875px;top:1764px;" width="28" height="26" viewBox="0 0 28 26"><path d="M8 2 L9.5 4.2 L11 1.8 Q12.5 4 12.2 7.5 Q12 11 9 13 L14 13 M12.2 7.5 Q9 4 5 6.5 Q2.3 8.3 2.6 11 L4.5 12 L1.5 13.5 L4 15.5 L9 15.5 L4.8 19.5 Q3 21.5 4.5 23 H16 Q21 23 20.5 18 Q20 15 18 13.5 Q14.5 10.5 15.5 6 Q17 1.2 21.5 1.5 Q25.5 2.2 25 7 Q24.5 9.5 22 10" fill="none" stroke="#cccccc" stroke-width="1.9" stroke-linejoin="round"/><circle cx="6" cy="8.5" r="1.1" fill="#cccccc"/></svg>
<svg style="left:2933px;top:1764px;" width="32" height="28" viewBox="0 0 32 28"><path d="M1.5 17 Q1.5 13 5 12 H27 Q30.5 13 30.5 17 Q30.5 25.5 16 25.5 Q1.5 25.5 1.5 17 Z" fill="#cccccc"/>
<path d="M6.5 12.5 H25.5 V19 Q16 22 6.5 19 Z" fill="#191919"/>
<rect x="5.5" y="2" width="10" height="10" rx="4.5" fill="none" stroke="#cccccc" stroke-width="2.4"/>
<rect x="16.5" y="2" width="10" height="10" rx="4.5" fill="none" stroke="#cccccc" stroke-width="2.4"/>
<path d="M1.5 4.5 L28.5 25" stroke="#191919" stroke-width="5"/><path d="M1.5 4.5 L28.5 25" stroke="#cccccc" stroke-width="2.2"/></svg>
<svg style="left:2996px;top:1761px;" width="26" height="30" viewBox="0 0 26 30"><path d="M3.6 22.5 L4.8 12.5 Q5.5 3.8 13.5 3.6 M19.5 16 L20.8 22.5 M2 23.2 H22.5" fill="none" stroke="#cccccc" stroke-width="1.9" stroke-linejoin="round"/><path d="M8.5 24 Q12 29.5 15.5 24 Z" fill="#cccccc"/><circle cx="19" cy="8.2" r="5" fill="#cccccc"/></svg>
</div>
<div class="a" style="left:112px;top:76px;width:2940px;height:1722px;border-radius:20px;border:2px solid #4d4d4d;border-top-color:#6a6a6a"></div>
<div class="win" style="pointer-events:none">
<div class="a" style="left:112px;top:146px;width:4px;height:96px;background:#3b82e0"></div>
<div class="a" style="left:112px;top:1756px;width:68px;height:42px;background:#3b7bd4"></div>
<svg style="left:130px;top:1760px" width="30" height="30" viewBox="0 0 30 30"><path d="M7 9 L16 17 L7 26" fill="none" stroke="#ffffff" stroke-width="2"/><path d="M24 4 L16 11 L24 18" fill="none" stroke="#ffffff" stroke-width="2"/></svg>
</div>
</body></html>
